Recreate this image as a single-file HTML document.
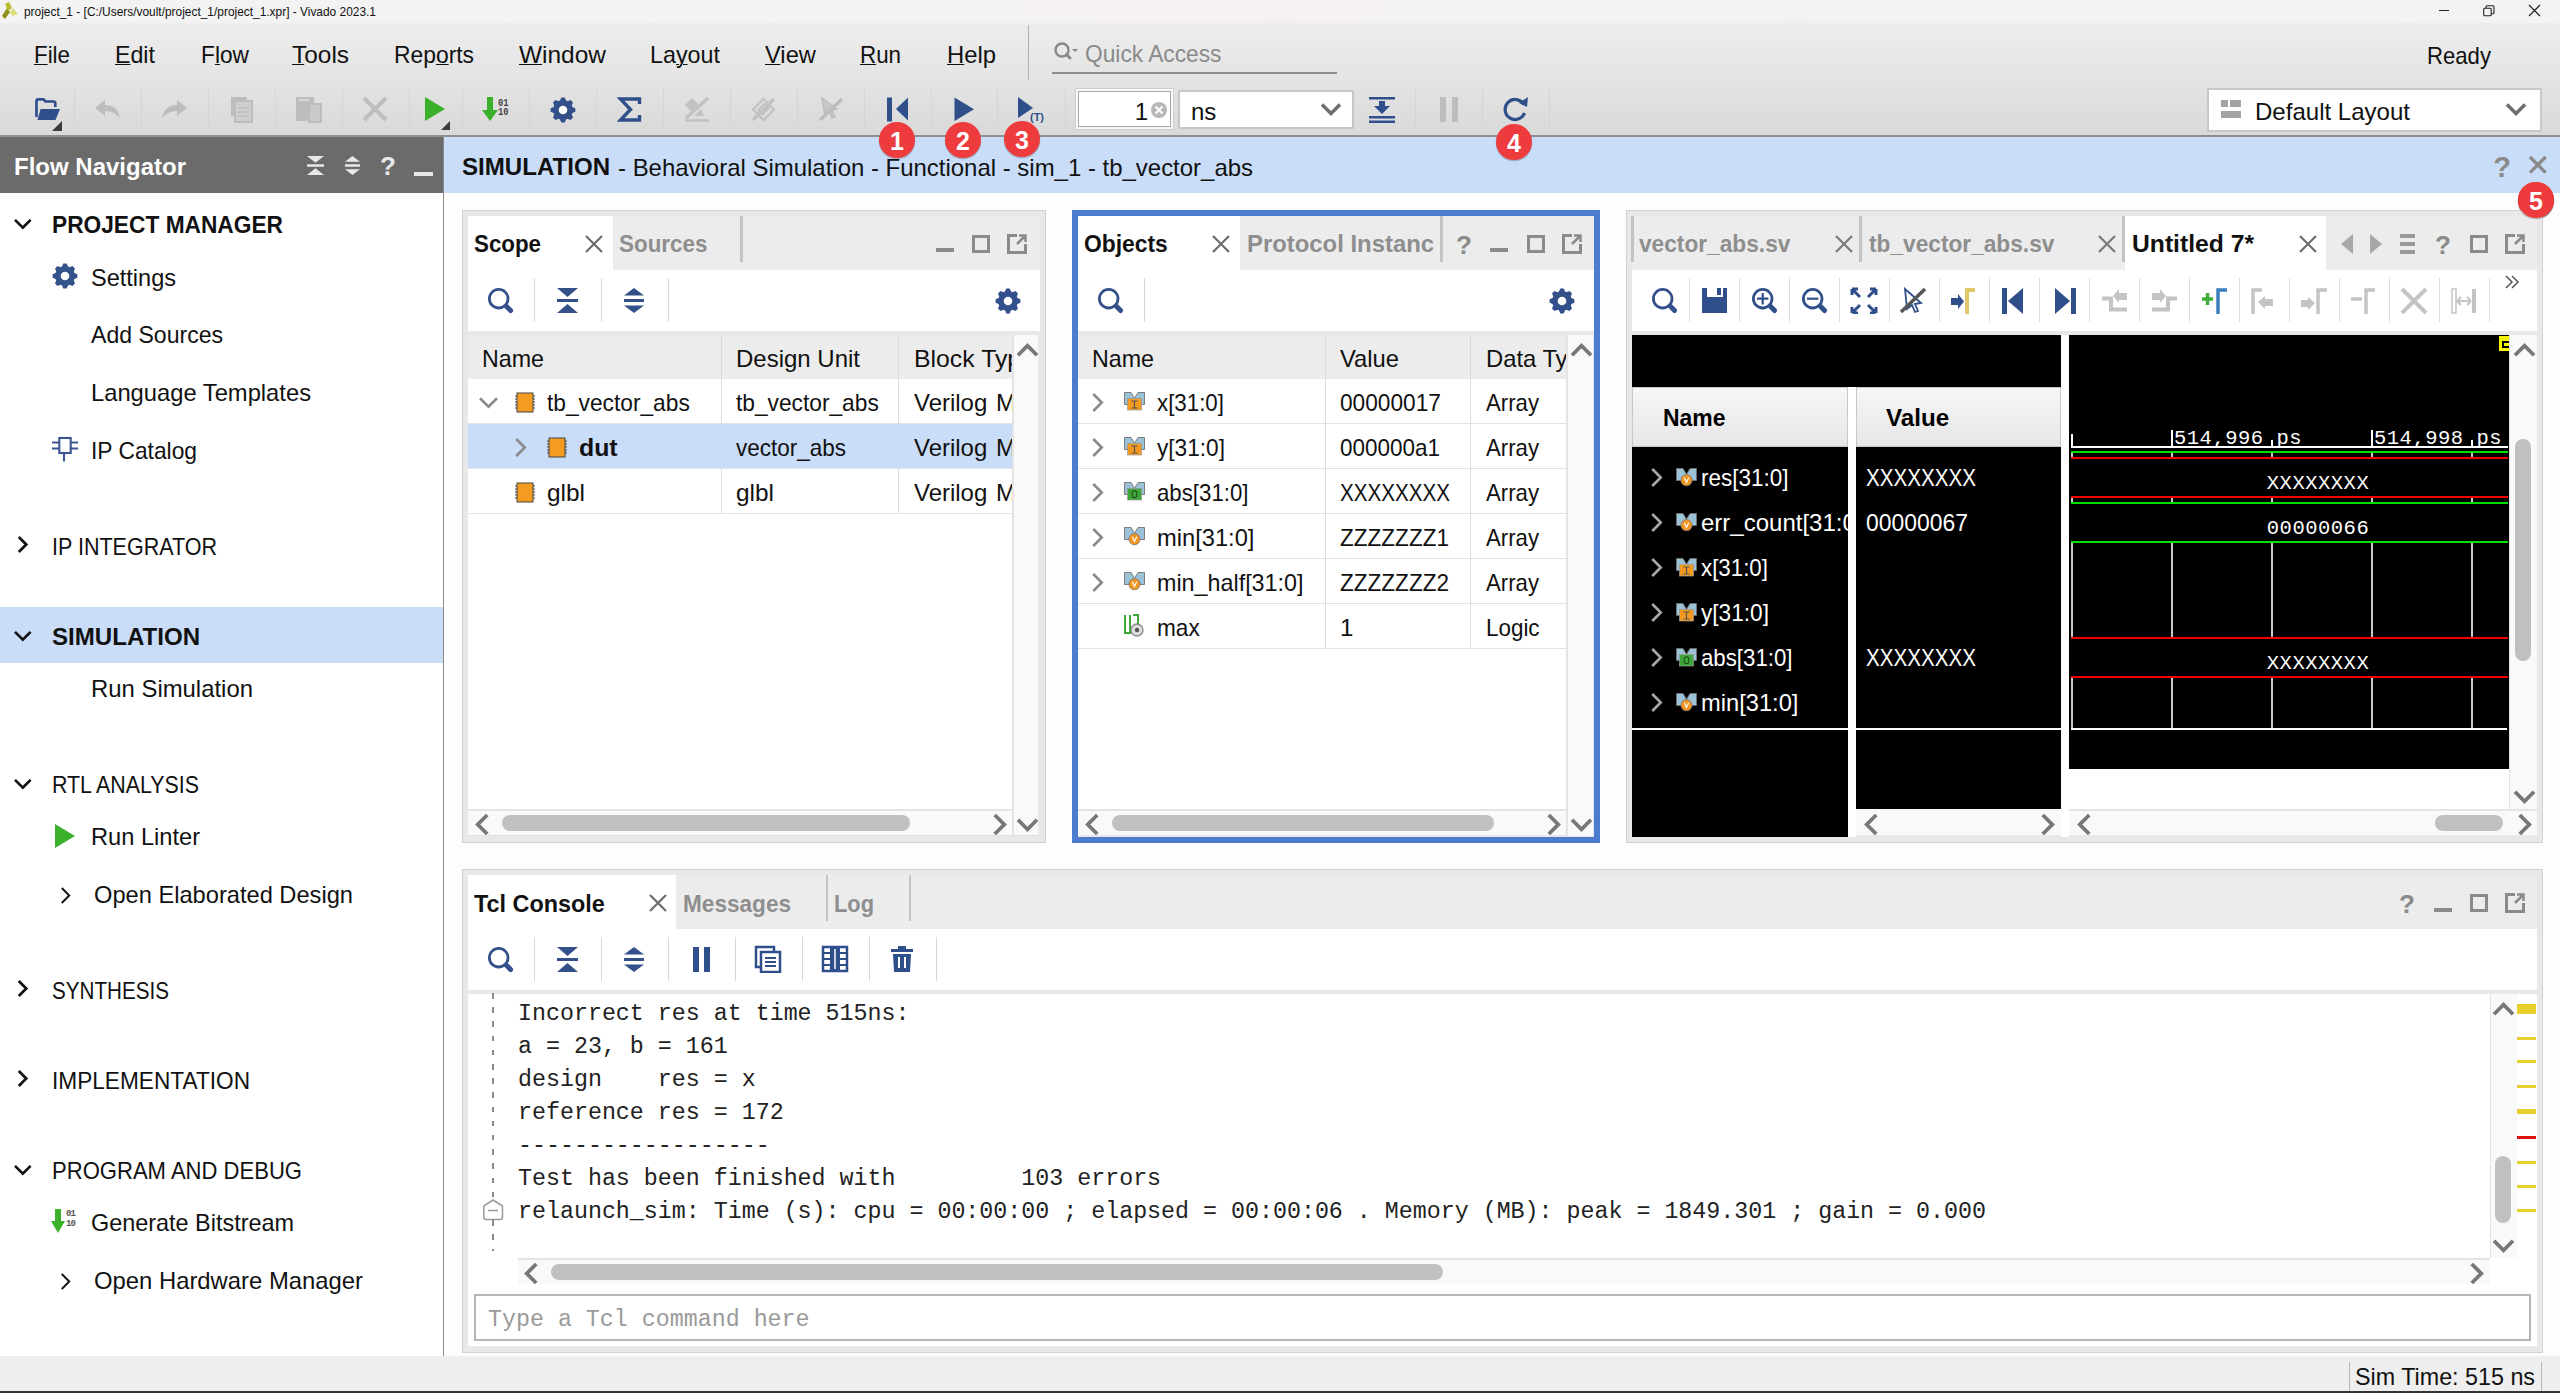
<!DOCTYPE html><html><head><meta charset="utf-8"><style>
html,body{margin:0;padding:0;width:2560px;height:1393px;overflow:hidden;background:#fdfdfd;}
body>div,body>svg{position:absolute;}
.t{position:absolute;white-space:pre;}
.s{font-family:"Liberation Sans",sans-serif;}
.m{font-family:"Liberation Mono",monospace;}
u{text-decoration:underline;text-underline-offset:1px;text-decoration-thickness:1.2px;}
</style></head><body>
<div style="left:0px;top:0px;width:2560px;height:23px;background:linear-gradient(90deg,#f3f3f3 0%,#f5f1f1 50%,#f2f2f5 70%,#f3f3f3 100%)"></div>
<svg style="left:1px;top:2px" width="18" height="18" viewBox="0 0 18 18"><polygon points="1,14 6,6 9,10 4,17" fill="#8f8f1a"/><polygon points="4,2 8,0 11,6 7,9" fill="#b9b934"/><polygon points="9,10 12,6 17,12 11,14" fill="#dede7c"/></svg>
<div class="t s" style="left:24.0px;top:3.0px;font-size:13px;line-height:17px;font-weight:400;color:#111;transform:scaleX(0.9162);transform-origin:0 0;">project_1 - [C:/Users/voult/project_1/project_1.xpr] - Vivado 2023.1</div>
<div style="left:2438.5px;top:10px;width:10.5px;height:1.2px;background:#222"></div>
<svg style="left:2483px;top:5px" width="12" height="12" viewBox="0 0 12 12"><rect x="0.7" y="3.2" width="7.5" height="7.5" rx="1" fill="none" stroke="#222" stroke-width="1.1"/><path d="M3,3.2 V1.7 Q3,0.7 4,0.7 H10 Q11,0.7 11,1.7 V7.7 Q11,8.7 10,8.7 H8.2" fill="none" stroke="#222" stroke-width="1.1"/></svg>
<svg style="left:2528px;top:4px" width="13" height="13" viewBox="0 0 13 13"><path d="M1,1 L12,12 M12,1 L1,12" stroke="#222" stroke-width="1.2"/></svg>
<div style="left:0px;top:23px;width:2560px;height:112px;background:linear-gradient(180deg,#ededed 0%,#e4e4e4 50%,#d9d9d9 100%)"></div>
<div style="left:0px;top:135px;width:2560px;height:2px;background:#8f8f8f"></div>
<div class="t s" style="left:34.0px;top:38.5px;font-size:24px;line-height:31px;font-weight:400;color:#111;transform:scaleX(0.9302);transform-origin:0 0;"><u>F</u>ile</div>
<div class="t s" style="left:115.0px;top:38.5px;font-size:24px;line-height:31px;font-weight:400;color:#111;transform:scaleX(0.9662);transform-origin:0 0;"><u>E</u>dit</div>
<div class="t s" style="left:201.0px;top:38.5px;font-size:24px;line-height:31px;font-weight:400;color:#111;transform:scaleX(0.9467);transform-origin:0 0;">F<u>l</u>ow</div>
<div class="t s" style="left:292.0px;top:38.5px;font-size:24px;line-height:31px;font-weight:400;color:#111;transform:scaleX(1.0179);transform-origin:0 0;"><u>T</u>ools</div>
<div class="t s" style="left:394.0px;top:38.5px;font-size:24px;line-height:31px;font-weight:400;color:#111;transform:scaleX(0.9524);transform-origin:0 0;">Rep<u>o</u>rts</div>
<div class="t s" style="left:519.0px;top:38.5px;font-size:24px;line-height:31px;font-weight:400;color:#111;transform:scaleX(1.0187);transform-origin:0 0;"><u>W</u>indow</div>
<div class="t s" style="left:650.0px;top:38.5px;font-size:24px;line-height:31px;font-weight:400;color:#111;transform:scaleX(0.9709);transform-origin:0 0;">La<u>y</u>out</div>
<div class="t s" style="left:765.0px;top:38.5px;font-size:24px;line-height:31px;font-weight:400;color:#111;transform:scaleX(0.9865);transform-origin:0 0;"><u>V</u>iew</div>
<div class="t s" style="left:860.0px;top:38.5px;font-size:24px;line-height:31px;font-weight:400;color:#111;transform:scaleX(0.9318);transform-origin:0 0;"><u>R</u>un</div>
<div class="t s" style="left:947.0px;top:38.5px;font-size:24px;line-height:31px;font-weight:400;color:#111;transform:scaleX(0.9919);transform-origin:0 0;"><u>H</u>elp</div>
<div style="left:1028.0px;top:25px;width:1px;height:55px;background:#b0b0b0"></div>
<svg style="left:1052px;top:40px" width="28" height="26" viewBox="0 0 28 26"><circle cx="10" cy="10" r="6.5" fill="none" stroke="#888" stroke-width="2.4"/><line x1="14.5" y1="14.5" x2="18" y2="18" stroke="#888" stroke-width="3" stroke-linecap="round"/><polygon points="20,9 26,9 23,12" fill="#888"/></svg>
<div class="t s" style="left:1085.0px;top:37.5px;font-size:24px;line-height:31px;font-weight:400;color:#8a8a8a;transform:scaleX(0.9473);transform-origin:0 0;">Quick Access</div>
<div style="left:1052px;top:72px;width:285px;height:2px;background:#8e8e8e"></div>
<div class="t s" style="left:2427.0px;top:39.5px;font-size:24px;line-height:31px;font-weight:400;color:#111;transform:scaleX(0.9222);transform-origin:0 0;">Ready</div>
<div style="left:74.0px;top:87px;width:1px;height:44px;background:#d5d5d5"></div>
<div style="left:141.0px;top:87px;width:1px;height:44px;background:#d5d5d5"></div>
<div style="left:208.0px;top:87px;width:1px;height:44px;background:#d5d5d5"></div>
<div style="left:275.0px;top:87px;width:1px;height:44px;background:#d5d5d5"></div>
<div style="left:342.0px;top:87px;width:1px;height:44px;background:#d5d5d5"></div>
<div style="left:409.0px;top:87px;width:1px;height:44px;background:#d5d5d5"></div>
<div style="left:462.0px;top:87px;width:1px;height:44px;background:#d5d5d5"></div>
<div style="left:529.0px;top:87px;width:1px;height:44px;background:#d5d5d5"></div>
<div style="left:596.0px;top:87px;width:1px;height:44px;background:#d5d5d5"></div>
<div style="left:663.0px;top:87px;width:1px;height:44px;background:#d5d5d5"></div>
<div style="left:730.0px;top:87px;width:1px;height:44px;background:#d5d5d5"></div>
<div style="left:797.0px;top:87px;width:1px;height:44px;background:#d5d5d5"></div>
<div style="left:864.0px;top:87px;width:1px;height:44px;background:#d5d5d5"></div>
<div style="left:931.0px;top:87px;width:1px;height:44px;background:#d5d5d5"></div>
<div style="left:997.0px;top:87px;width:1px;height:44px;background:#d5d5d5"></div>
<div style="left:1065.0px;top:87px;width:1px;height:44px;background:#d5d5d5"></div>
<div style="left:1415.0px;top:87px;width:1px;height:44px;background:#d5d5d5"></div>
<div style="left:1482.0px;top:87px;width:1px;height:44px;background:#d5d5d5"></div>
<div style="left:1549.0px;top:87px;width:1px;height:44px;background:#d5d5d5"></div>
<svg style="left:33px;top:96px" width="30" height="26" viewBox="0 0 30 26"><path d="M3.5,21 V5 Q3.5,3.3 5.2,3.3 H10.5 L12.5,5.5 H20.5 Q22.3,5.5 22.3,7.2 V11" fill="none" stroke="#2f4f8a" stroke-width="2.7"/><polygon points="7.5,13 27,13 22.5,24 4.5,24" fill="#2f4f8a"/></svg>
<svg style="left:52px;top:121px" width="11" height="11" viewBox="0 0 11 11"><polygon points="10,0 10,10 0,10" fill="#3c3c3c"/></svg>
<svg style="left:94px;top:100px" width="28" height="20" viewBox="0 0 28 20"><path d="M1,8 L11,0 V5 Q24,5 26,19 Q21,11 11,11 V16 Z" fill="#bdbdbd"/></svg>
<svg style="left:160px;top:100px" width="28" height="20" viewBox="0 0 28 20"><path d="M27,8 L17,0 V5 Q4,5 2,19 Q7,11 17,11 V16 Z" fill="#bdbdbd"/></svg>
<svg style="left:230px;top:96px" width="24" height="28" viewBox="0 0 24 28"><rect x="1" y="1" width="16" height="19" fill="#bdbdbd"/><rect x="5" y="5" width="17" height="21" fill="#cfcfcf" stroke="#bdbdbd" stroke-width="2"/><path d="M8,12 H19 M8,16 H19 M8,20 H19" stroke="#bdbdbd" stroke-width="1.5"/></svg>
<svg style="left:295px;top:96px" width="28" height="28" viewBox="0 0 28 28"><rect x="1" y="1" width="18" height="24" fill="#bdbdbd"/><rect x="4" y="3" width="10" height="2" fill="#d6d6d6"/><rect x="14" y="8" width="12" height="18" fill="#cacaca" stroke="#bdbdbd" stroke-width="2"/></svg>
<svg style="left:362px;top:96px" width="26" height="26" viewBox="0 0 26 26"><path d="M2,2 L24,24 M24,2 L2,24" stroke="#bdbdbd" stroke-width="4"/></svg>
<svg style="left:424px;top:96px" width="22" height="26" viewBox="0 0 22 26"><polygon points="1,1 21,13 1,25" fill="#3bb02a"/></svg>
<svg style="left:441px;top:121px" width="10" height="10" viewBox="0 0 10 10"><polygon points="9,0 9,9 0,9" fill="#3c3c3c"/></svg>
<svg style="left:482px;top:96px" width="28" height="26" viewBox="0 0 28 26"><rect x="5" y="1" width="6" height="14" fill="#3bb02a"/><polygon points="0,14 16,14 8,25" fill="#3bb02a"/></svg>
<div class="t m" style="left:497.5px;top:94.5px;font-size:11.5px;line-height:15px;font-weight:700;color:#444;transform:scaleX(0.7609);transform-origin:0 0;">01</div>
<div class="t m" style="left:497.5px;top:104.0px;font-size:11.5px;line-height:15px;font-weight:700;color:#444;transform:scaleX(0.7609);transform-origin:0 0;">10</div>
<svg style="left:548.5px;top:95.5px" width="28" height="28" viewBox="0 0 28 28"><path d="M10.72,5.30 L12.26,1.62 L15.74,1.62 L17.28,5.30 L17.84,5.53 L21.52,4.01 L23.99,6.48 L22.47,10.16 L22.70,10.72 L26.38,12.26 L26.38,15.74 L22.70,17.28 L22.47,17.84 L23.99,21.52 L21.52,23.99 L17.84,22.47 L17.28,22.70 L15.74,26.38 L12.26,26.38 L10.72,22.70 L10.16,22.47 L6.48,23.99 L4.01,21.52 L5.53,17.84 L5.30,17.28 L1.62,15.74 L1.62,12.26 L5.30,10.72 L5.53,10.16 L4.01,6.48 L6.48,4.01 L10.16,5.53Z" fill="#33508a"/><circle cx="14" cy="14" r="9.9" fill="#33508a"/><circle cx="14" cy="14" r="4.3" fill="#fff"/></svg>
<svg style="left:617px;top:96px" width="26" height="27" viewBox="0 0 26 27"><path d="M22.5,8 V3 H3.5 L13.5,13.5 L3.5,24 H22.5 V19" fill="none" stroke="#2f4f8a" stroke-width="3.4" stroke-linejoin="miter"/></svg>
<svg style="left:683px;top:96px" width="28" height="27" viewBox="0 0 28 27"><path d="M2,24.5 H26" stroke="#c2c2c2" stroke-width="2.5"/><polygon points="2,9 9,2 16,9 9,16" fill="#c2c2c2"/><path d="M3,22 L25,2" stroke="#c2c2c2" stroke-width="3.5"/><polygon points="11,20 18,13 21,20" fill="#c2c2c2"/></svg>
<svg style="left:750px;top:96px" width="28" height="27" viewBox="0 0 28 27"><rect x="6" y="6" width="15" height="15" transform="rotate(45 13.5 13.5)" fill="none" stroke="#c2c2c2" stroke-width="2.2"/><rect x="9" y="10" width="9" height="6" transform="rotate(-45 13.5 13)" fill="none" stroke="#c2c2c2" stroke-width="2"/><path d="M3,24 L24,3" stroke="#c2c2c2" stroke-width="3.5"/></svg>
<svg style="left:817px;top:96px" width="28" height="27" viewBox="0 0 28 27"><path d="M5,2 L20,13 L15,14 L18,21 L15,22 L12,15 L8,19 Z" fill="#c8c8c8" stroke="#bdbdbd" stroke-width="1.5"/><path d="M3,24 L25,3" stroke="#bdbdbd" stroke-width="3.5"/></svg>
<svg style="left:886px;top:97px" width="24" height="25" viewBox="0 0 24 25"><rect x="1" y="0.5" width="5" height="24" fill="#2f4f8a"/><polygon points="22,0.5 22,23.5 10,12" fill="#2f4f8a"/></svg>
<svg style="left:954px;top:97px" width="22" height="25" viewBox="0 0 22 25"><polygon points="0.5,0.5 20,12.2 0.5,24" fill="#2f4f8a"/></svg>
<svg style="left:1017px;top:96px" width="30" height="28" viewBox="0 0 30 28"><polygon points="1,1 16,12 1,22" fill="#2f4f8a"/></svg>
<div class="t s" style="left:1030.0px;top:110.5px;font-size:10px;line-height:13px;font-weight:700;color:#2f4f8a;transform:scaleX(1.0938);transform-origin:0 0;">(T)</div>
<div style="left:1075px;top:88px;width:99px;height:42px;background:#f8f8f8;border:1px solid #cfcfcf;box-sizing:border-box"></div>
<div style="left:1078px;top:91px;width:93px;height:36px;background:#fff;border:1px solid #a8a8a8;box-sizing:border-box"></div>
<div class="t s" style="right:1412px;top:95.5px;font-size:24px;line-height:31px;font-weight:400;color:#111;">1</div>
<svg style="left:1150px;top:101px" width="18" height="18" viewBox="0 0 18 18"><circle cx="9" cy="9" r="8" fill="#b8b8b8"/><path d="M5.5,5.5 L12.5,12.5 M12.5,5.5 L5.5,12.5" stroke="#fff" stroke-width="2"/></svg>
<div style="left:1178px;top:90px;width:176px;height:39px;background:#fff;border:2px solid #c6c6c6;box-sizing:border-box"></div>
<div class="t s" style="left:1191.0px;top:95.5px;font-size:24px;line-height:31px;font-weight:400;color:#111;">ns</div>
<svg style="left:1319px;top:97px" width="24" height="24" viewBox="0 0 24 24"><path d="M-9,-4.5 L0,4.5 L9,-4.5" transform="translate(12,12)" fill="none" stroke="#6e6e6e" stroke-width="3.5"/></svg>
<svg style="left:1368px;top:96px" width="28" height="28" viewBox="0 0 28 28"><rect x="1" y="1" width="26" height="2.5" fill="#2f4f8a"/><rect x="11" y="5" width="6" height="6" fill="#2f4f8a"/><polygon points="6,10 22,10 14,18" fill="#2f4f8a"/><rect x="1" y="20" width="26" height="2.5" fill="#2f4f8a"/><rect x="1" y="24.5" width="26" height="2.5" fill="#2f4f8a"/></svg>
<div style="left:1440px;top:97px;width:6px;height:25px;background:#bdbdbd"></div>
<div style="left:1452px;top:97px;width:6px;height:25px;background:#bdbdbd"></div>
<svg style="left:1502px;top:96px" width="28" height="26" viewBox="0 0 28 26"><path d="M21.5,8 A10,10 0 1 0 22.5,17" fill="none" stroke="#2f4f8a" stroke-width="3.2"/><polygon points="17,7 26,1 25,11" fill="#2f4f8a"/></svg>
<div style="left:2207px;top:88px;width:335px;height:44px;background:#fff;border:2px solid #c8c8c8;box-sizing:border-box"></div>
<div style="left:2221px;top:100px;width:7px;height:7px;background:#a3a3a3"></div>
<div style="left:2230px;top:100px;width:11px;height:7px;background:#a3a3a3"></div>
<div style="left:2221px;top:111px;width:20px;height:7px;background:#a3a3a3"></div>
<div class="t s" style="left:2255.0px;top:95.5px;font-size:24px;line-height:31px;font-weight:400;color:#111;transform:scaleX(1.0013);transform-origin:0 0;">Default Layout</div>
<svg style="left:2504px;top:97px" width="24" height="24" viewBox="0 0 24 24"><path d="M-9,-4.5 L0,4.5 L9,-4.5" transform="translate(12,12)" fill="none" stroke="#6e6e6e" stroke-width="3.5"/></svg>
<div style="left:0px;top:137px;width:443px;height:56px;background:#6b6b6b"></div>
<div class="t s" style="left:14.0px;top:150.5px;font-size:24px;line-height:31px;font-weight:700;color:#fff;transform:scaleX(1.0000);transform-origin:0 0;">Flow Navigator</div>
<svg style="left:307.0px;top:155.5px" width="17" height="19" viewBox="0 0 17 19"><polygon points="0,0 17,0 8.5,6.84" fill="#e8e8e8"/><rect x="0" y="8.25" width="17" height="2.5" fill="#e8e8e8"/><polygon points="8.5,12.16 17,19 0,19" fill="#e8e8e8"/></svg>
<svg style="left:344.5px;top:155.5px" width="15" height="19" viewBox="0 0 15 19"><polygon points="7.5,0 15,5.7 0,5.7" fill="#e8e8e8"/><rect x="0" y="8.25" width="15" height="2.5" fill="#e8e8e8"/><polygon points="0,13.3 15,13.3 7.5,19" fill="#e8e8e8"/></svg>
<div class="t s" style="left:-112px;width:1000px;text-align:center;top:149.0px;font-size:26px;line-height:34px;font-weight:700;color:#e8e8e8;">?</div>
<div style="left:414px;top:172px;width:19px;height:4px;background:#e8e8e8"></div>
<div style="left:0px;top:193px;width:443px;height:1163px;background:#fff"></div>
<div style="left:443px;top:137px;width:1px;height:1219px;background:#8a8a8a"></div>
<div style="left:0px;top:607px;width:443px;height:56px;background:#c9dcf8"></div>
<svg style="left:12.2px;top:212.7px" width="21.6" height="21.6" viewBox="0 0 21.6 21.6"><path d="M-7.8,-3.9 L0,3.9 L7.8,-3.9" transform="translate(10.8,10.8)" fill="none" stroke="#111" stroke-width="2.7"/></svg>
<div class="t s" style="left:52.0px;top:208.5px;font-size:24px;line-height:31px;font-weight:700;color:#111;transform:scaleX(0.9467);transform-origin:0 0;">PROJECT MANAGER</div>
<svg style="left:11.5px;top:534.0px" width="21.0" height="21.0" viewBox="0 0 21.0 21.0"><path d="M-3.75,-7.5 L3.75,0 L-3.75,7.5" transform="translate(10.5,10.5)" fill="none" stroke="#111" stroke-width="2.7"/></svg>
<div class="t s" style="left:52.0px;top:530.5px;font-size:24px;line-height:31px;font-weight:400;color:#111;transform:scaleX(0.8967);transform-origin:0 0;">IP INTEGRATOR</div>
<svg style="left:12.2px;top:624.7px" width="21.6" height="21.6" viewBox="0 0 21.6 21.6"><path d="M-7.8,-3.9 L0,3.9 L7.8,-3.9" transform="translate(10.8,10.8)" fill="none" stroke="#111" stroke-width="2.7"/></svg>
<div class="t s" style="left:52.0px;top:620.5px;font-size:24px;line-height:31px;font-weight:700;color:#111;transform:scaleX(1.0034);transform-origin:0 0;">SIMULATION</div>
<svg style="left:12.2px;top:772.7px" width="21.6" height="21.6" viewBox="0 0 21.6 21.6"><path d="M-7.8,-3.9 L0,3.9 L7.8,-3.9" transform="translate(10.8,10.8)" fill="none" stroke="#111" stroke-width="2.7"/></svg>
<div class="t s" style="left:52.0px;top:768.5px;font-size:24px;line-height:31px;font-weight:400;color:#111;transform:scaleX(0.8909);transform-origin:0 0;">RTL ANALYSIS</div>
<svg style="left:11.5px;top:978.0px" width="21.0" height="21.0" viewBox="0 0 21.0 21.0"><path d="M-3.75,-7.5 L3.75,0 L-3.75,7.5" transform="translate(10.5,10.5)" fill="none" stroke="#111" stroke-width="2.7"/></svg>
<div class="t s" style="left:52.0px;top:974.5px;font-size:24px;line-height:31px;font-weight:400;color:#111;transform:scaleX(0.8603);transform-origin:0 0;">SYNTHESIS</div>
<svg style="left:11.5px;top:1068.0px" width="21.0" height="21.0" viewBox="0 0 21.0 21.0"><path d="M-3.75,-7.5 L3.75,0 L-3.75,7.5" transform="translate(10.5,10.5)" fill="none" stroke="#111" stroke-width="2.7"/></svg>
<div class="t s" style="left:52.0px;top:1064.5px;font-size:24px;line-height:31px;font-weight:400;color:#111;transform:scaleX(0.9438);transform-origin:0 0;">IMPLEMENTATION</div>
<svg style="left:12.2px;top:1158.7px" width="21.6" height="21.6" viewBox="0 0 21.6 21.6"><path d="M-7.8,-3.9 L0,3.9 L7.8,-3.9" transform="translate(10.8,10.8)" fill="none" stroke="#111" stroke-width="2.7"/></svg>
<div class="t s" style="left:52.0px;top:1154.5px;font-size:24px;line-height:31px;font-weight:400;color:#111;transform:scaleX(0.9191);transform-origin:0 0;">PROGRAM AND DEBUG</div>
<div class="t s" style="left:91.0px;top:261.5px;font-size:24px;line-height:31px;font-weight:400;color:#111;transform:scaleX(0.9804);transform-origin:0 0;">Settings</div>
<div class="t s" style="left:91.0px;top:318.5px;font-size:24px;line-height:31px;font-weight:400;color:#111;transform:scaleX(0.9607);transform-origin:0 0;">Add Sources</div>
<div class="t s" style="left:91.0px;top:376.5px;font-size:24px;line-height:31px;font-weight:400;color:#111;transform:scaleX(0.9892);transform-origin:0 0;">Language Templates</div>
<div class="t s" style="left:91.0px;top:434.5px;font-size:24px;line-height:31px;font-weight:400;color:#111;transform:scaleX(0.9498);transform-origin:0 0;">IP Catalog</div>
<div class="t s" style="left:91.0px;top:672.5px;font-size:24px;line-height:31px;font-weight:400;color:#111;transform:scaleX(0.9951);transform-origin:0 0;">Run Simulation</div>
<div class="t s" style="left:91.0px;top:820.5px;font-size:24px;line-height:31px;font-weight:400;color:#111;transform:scaleX(0.9846);transform-origin:0 0;">Run Linter</div>
<div class="t s" style="left:91.0px;top:1206.5px;font-size:24px;line-height:31px;font-weight:400;color:#111;transform:scaleX(0.9755);transform-origin:0 0;">Generate Bitstream</div>
<svg style="left:54.5px;top:884.5px" width="21.0" height="21.0" viewBox="0 0 21.0 21.0"><path d="M-3.75,-7.5 L3.75,0 L-3.75,7.5" transform="translate(10.5,10.5)" fill="none" stroke="#111" stroke-width="1.9"/></svg>
<div class="t s" style="left:94.0px;top:878.5px;font-size:24px;line-height:31px;font-weight:400;color:#111;transform:scaleX(0.9852);transform-origin:0 0;">Open Elaborated Design</div>
<svg style="left:54.5px;top:1270.5px" width="21.0" height="21.0" viewBox="0 0 21.0 21.0"><path d="M-3.75,-7.5 L3.75,0 L-3.75,7.5" transform="translate(10.5,10.5)" fill="none" stroke="#111" stroke-width="1.9"/></svg>
<div class="t s" style="left:94.0px;top:1264.5px;font-size:24px;line-height:31px;font-weight:400;color:#111;transform:scaleX(0.9934);transform-origin:0 0;">Open Hardware Manager</div>
<svg style="left:50.5px;top:262.0px" width="28" height="28" viewBox="0 0 28 28"><path d="M10.72,5.30 L12.26,1.62 L15.74,1.62 L17.28,5.30 L17.84,5.53 L21.52,4.01 L23.99,6.48 L22.47,10.16 L22.70,10.72 L26.38,12.26 L26.38,15.74 L22.70,17.28 L22.47,17.84 L23.99,21.52 L21.52,23.99 L17.84,22.47 L17.28,22.70 L15.74,26.38 L12.26,26.38 L10.72,22.70 L10.16,22.47 L6.48,23.99 L4.01,21.52 L5.53,17.84 L5.30,17.28 L1.62,15.74 L1.62,12.26 L5.30,10.72 L5.53,10.16 L4.01,6.48 L6.48,4.01 L10.16,5.53Z" fill="#34528a"/><circle cx="14" cy="14" r="9.9" fill="#34528a"/><circle cx="14" cy="14" r="4.3" fill="#fff"/></svg>
<svg style="left:51px;top:436px" width="27" height="27" viewBox="0 0 27 27"><rect x="8.3" y="2" width="11.4" height="15" fill="none" stroke="#3a5590" stroke-width="2.1"/><path d="M1,6.5 H8 M1,12.5 H8 M20,6.5 H27 M20,12.5 H27 M13,17 V25.5" stroke="#3a5590" stroke-width="2.1"/></svg>
<svg style="left:53.5px;top:823px" width="24" height="26" viewBox="0 0 24 26"><polygon points="1,1 21,13 1,25" fill="#3bb02a"/></svg>
<svg style="left:51px;top:1208px" width="14" height="26" viewBox="0 0 14 26"><rect x="4" y="1" width="6" height="14" fill="#3bb02a"/><polygon points="0,13 14,13 7,25" fill="#3bb02a"/></svg>
<div class="t m" style="left:66.0px;top:1208.0px;font-size:9px;line-height:12px;font-weight:700;color:#555;letter-spacing:-1px">01</div>
<div class="t m" style="left:66.0px;top:1218.0px;font-size:9px;line-height:12px;font-weight:700;color:#555;letter-spacing:-1px">10</div>
<div style="left:0px;top:1356px;width:2560px;height:37px;background:#eeeeee"></div>
<div style="left:2349.0px;top:1362px;width:1px;height:31px;background:#b8b8b8"></div>
<div style="left:2541.0px;top:1362px;width:1px;height:31px;background:#b8b8b8"></div>
<div class="t s" style="left:2355.0px;top:1360.5px;font-size:24px;line-height:31px;font-weight:400;color:#111;transform:scaleX(0.9709);transform-origin:0 0;">Sim Time: 515 ns</div>
<div style="left:0px;top:1391px;width:2560px;height:2px;background:#333"></div>
<div style="left:444px;top:137px;width:2116px;height:56px;background:#c9ddf9"></div>
<div class="t s" style="left:462.0px;top:150.5px;font-size:24px;line-height:31px;font-weight:700;color:#111;transform:scaleX(1.0034);transform-origin:0 0;">SIMULATION</div>
<div class="t s" style="left:618.0px;top:151.5px;font-size:24px;line-height:31px;font-weight:400;color:#111;transform:scaleX(0.9980);transform-origin:0 0;">- Behavioral Simulation - Functional - sim_1 - tb_vector_abs</div>
<div class="t s" style="left:2002px;width:1000px;text-align:center;top:148.0px;font-size:29px;line-height:38px;font-weight:700;color:#8a8a8a;">?</div>
<svg style="left:2528.2px;top:155.2px" width="19.6" height="19.6" viewBox="0 0 19.6 19.6"><path d="M2,2 L17.6,17.6 M17.6,2 L2,17.6" stroke="#8a8a8a" stroke-width="3.3"/></svg>
<svg style="left:2515px;top:181px" width="42" height="43" viewBox="0 0 42 43"><circle cx="21" cy="20.2" r="18.3" fill="#000" opacity="0.2"/><circle cx="21" cy="19" r="18" fill="#ee3b3d"/></svg>
<div class="t s" style="left:2036px;width:1000px;text-align:center;top:185.0px;font-size:25px;line-height:32px;font-weight:700;color:#fff;">5</div>
<div style="left:462px;top:210px;width:584px;height:633px;background:#e8e8e8;border:1px solid #d2d2d2;box-sizing:border-box"></div>
<div style="left:468px;top:216px;width:572px;height:54px;background:#ececec"></div>
<div style="left:468px;top:216px;width:145px;height:54px;background:#fff"></div>
<div class="t s" style="left:474.0px;top:227.5px;font-size:24px;line-height:31px;font-weight:700;color:#111;transform:scaleX(0.9306);transform-origin:0 0;">Scope</div>
<svg style="left:584px;top:234px" width="20" height="20" viewBox="0 0 20 20"><path d="M2,2 L18,18 M18,2 L2,18" stroke="#6e6e6e" stroke-width="2.2"/></svg>
<div class="t s" style="left:619.0px;top:227.5px;font-size:24px;line-height:31px;font-weight:700;color:#8e8e8e;transform:scaleX(0.9335);transform-origin:0 0;">Sources</div>
<div style="left:740.25px;top:216px;width:2.5px;height:46px;background:#c4c4c4"></div>
<div style="left:936px;top:248px;width:18px;height:3.5px;background:#8a8a8a"></div>
<div style="left:972px;top:235px;width:18px;height:18px;border:3px solid #8a8a8a;box-sizing:border-box"></div>
<svg style="left:1007px;top:234px" width="20" height="20" viewBox="0 0 20 20"><path d="M10,1.5 H1.5 V18.5 H18.5 V10" fill="none" stroke="#8a8a8a" stroke-width="3"/><path d="M10,10 L18,2 M12,1.5 H18.5 V8" fill="none" stroke="#8a8a8a" stroke-width="2.5"/></svg>
<div style="left:468px;top:270px;width:572px;height:61px;background:#fff"></div>
<svg style="left:488px;top:288px" width="27" height="27" viewBox="0 0 27 27"><circle cx="10.7" cy="10.7" r="9.3" fill="none" stroke="#33508a" stroke-width="2.8"/><line x1="18.6" y1="18.6" x2="22.6" y2="22.6" stroke="#33508a" stroke-width="5" stroke-linecap="round"/></svg>
<div style="left:534.0px;top:278px;width:1px;height:44px;background:#d8d8d8"></div>
<div style="left:601.0px;top:278px;width:1px;height:44px;background:#d8d8d8"></div>
<div style="left:668.0px;top:278px;width:1px;height:44px;background:#d8d8d8"></div>
<svg style="left:556.5px;top:287.5px" width="21" height="25" viewBox="0 0 21 25"><polygon points="0,0 21,0 10.5,9.0" fill="#33508a"/><rect x="0" y="11.0" width="21" height="3.0" fill="#33508a"/><polygon points="10.5,16.0 21,25 0,25" fill="#33508a"/></svg>
<svg style="left:624.0px;top:287.5px" width="20" height="25" viewBox="0 0 20 25"><polygon points="10.0,0 20,7.5 0,7.5" fill="#33508a"/><rect x="0" y="11.0" width="20" height="3.0" fill="#33508a"/><polygon points="0,17.5 20,17.5 10.0,25" fill="#33508a"/></svg>
<svg style="left:993.5px;top:286.5px" width="28" height="28" viewBox="0 0 28 28"><path d="M10.72,5.30 L12.26,1.62 L15.74,1.62 L17.28,5.30 L17.84,5.53 L21.52,4.01 L23.99,6.48 L22.47,10.16 L22.70,10.72 L26.38,12.26 L26.38,15.74 L22.70,17.28 L22.47,17.84 L23.99,21.52 L21.52,23.99 L17.84,22.47 L17.28,22.70 L15.74,26.38 L12.26,26.38 L10.72,22.70 L10.16,22.47 L6.48,23.99 L4.01,21.52 L5.53,17.84 L5.30,17.28 L1.62,15.74 L1.62,12.26 L5.30,10.72 L5.53,10.16 L4.01,6.48 L6.48,4.01 L10.16,5.53Z" fill="#33508a"/><circle cx="14" cy="14" r="9.9" fill="#33508a"/><circle cx="14" cy="14" r="4.3" fill="#fff"/></svg>
<div style="left:468px;top:335px;width:545px;height:475px;background:#fff"></div>
<div style="left:468px;top:335px;width:545px;height:44px;background:#ececec"></div>
<div style="left:721.0px;top:335px;width:1px;height:178px;background:#dcdcdc"></div>
<div style="left:898.0px;top:335px;width:1px;height:178px;background:#dcdcdc"></div>
<div class="t s" style="left:482.0px;top:342.5px;font-size:24px;line-height:31px;font-weight:400;color:#111;transform:scaleX(0.9688);transform-origin:0 0;">Name</div>
<div class="t s" style="left:736.0px;top:342.5px;font-size:24px;line-height:31px;font-weight:400;color:#111;transform:scaleX(0.9992);transform-origin:0 0;">Design Unit</div>
<div style="left:0;top:0;width:1012px;height:1393px;overflow:hidden">
<div class="t s" style="left:914.0px;top:342.5px;font-size:24px;line-height:31px;font-weight:400;color:#111;transform:scaleX(1.0342);transform-origin:0 0;">Block Type</div>
</div>
<div style="left:468px;top:423px;width:545px;height:45px;background:#c9dcf8"></div>
<div style="left:468px;top:423px;width:545px;height:1px;background:#e2e2e2"></div>
<div style="left:468px;top:468px;width:545px;height:1px;background:#e2e2e2"></div>
<div style="left:468px;top:513px;width:545px;height:1px;background:#e2e2e2"></div>
<svg style="left:476.5px;top:390.5px" width="23.0" height="23.0" viewBox="0 0 23.0 23.0"><path d="M-8.5,-4.25 L0,4.25 L8.5,-4.25" transform="translate(11.5,11.5)" fill="none" stroke="#8a8a8a" stroke-width="2.6"/></svg>
<svg style="left:514px;top:392px" width="23" height="21" viewBox="0 0 23 21"><rect x="3" y="1" width="16" height="19" fill="#f39c1f" stroke="#444" stroke-width="1"/><path d="M1,4 H3 M1,7 H3 M1,10 H3 M1,13 H3 M1,16 H3 M19,4 H21 M19,7 H21 M19,10 H21 M19,13 H21 M19,16 H21" stroke="#444" stroke-width="1"/></svg>
<div class="t s" style="left:547.0px;top:386.5px;font-size:24px;line-height:31px;font-weight:400;color:#111;transform:scaleX(0.9469);transform-origin:0 0;">tb_vector_abs</div>
<div class="t s" style="left:736.0px;top:386.5px;font-size:24px;line-height:31px;font-weight:400;color:#111;transform:scaleX(0.9469);transform-origin:0 0;">tb_vector_abs</div>
<svg style="left:509.0px;top:435.5px" width="23.0" height="23.0" viewBox="0 0 23.0 23.0"><path d="M-4.25,-8.5 L4.25,0 L-4.25,8.5" transform="translate(11.5,11.5)" fill="none" stroke="#8a8a8a" stroke-width="2.6"/></svg>
<svg style="left:546px;top:437px" width="23" height="21" viewBox="0 0 23 21"><rect x="3" y="1" width="16" height="19" fill="#f39c1f" stroke="#444" stroke-width="1"/><path d="M1,4 H3 M1,7 H3 M1,10 H3 M1,13 H3 M1,16 H3 M19,4 H21 M19,7 H21 M19,10 H21 M19,13 H21 M19,16 H21" stroke="#444" stroke-width="1"/></svg>
<div class="t s" style="left:579.0px;top:431.5px;font-size:24px;line-height:31px;font-weight:700;color:#111;transform:scaleX(1.0349);transform-origin:0 0;">dut</div>
<div class="t s" style="left:736.0px;top:431.5px;font-size:24px;line-height:31px;font-weight:400;color:#111;transform:scaleX(0.9370);transform-origin:0 0;">vector_abs</div>
<svg style="left:514px;top:482px" width="23" height="21" viewBox="0 0 23 21"><rect x="3" y="1" width="16" height="19" fill="#f39c1f" stroke="#444" stroke-width="1"/><path d="M1,4 H3 M1,7 H3 M1,10 H3 M1,13 H3 M1,16 H3 M19,4 H21 M19,7 H21 M19,10 H21 M19,13 H21 M19,16 H21" stroke="#444" stroke-width="1"/></svg>
<div class="t s" style="left:547.0px;top:476.5px;font-size:24px;line-height:31px;font-weight:400;color:#111;transform:scaleX(1.0160);transform-origin:0 0;">glbl</div>
<div class="t s" style="left:736.0px;top:476.5px;font-size:24px;line-height:31px;font-weight:400;color:#111;transform:scaleX(1.0160);transform-origin:0 0;">glbl</div>
<div class="t s" style="left:914.0px;top:386.5px;font-size:24px;line-height:31px;font-weight:400;color:#111;transform:scaleX(0.9986);transform-origin:0 0;">Verilog</div>
<div style="left:0;top:0;width:1012px;height:1393px;overflow:hidden">
<div class="t s" style="left:996.0px;top:386.5px;font-size:24px;line-height:31px;font-weight:400;color:#111;">Module</div>
</div>
<div class="t s" style="left:914.0px;top:431.5px;font-size:24px;line-height:31px;font-weight:400;color:#111;transform:scaleX(0.9986);transform-origin:0 0;">Verilog</div>
<div style="left:0;top:0;width:1012px;height:1393px;overflow:hidden">
<div class="t s" style="left:996.0px;top:431.5px;font-size:24px;line-height:31px;font-weight:400;color:#111;">Module</div>
</div>
<div class="t s" style="left:914.0px;top:476.5px;font-size:24px;line-height:31px;font-weight:400;color:#111;transform:scaleX(0.9986);transform-origin:0 0;">Verilog</div>
<div style="left:0;top:0;width:1012px;height:1393px;overflow:hidden">
<div class="t s" style="left:996.0px;top:476.5px;font-size:24px;line-height:31px;font-weight:400;color:#111;">Module</div>
</div>
<div style="left:1012px;top:335px;width:26px;height:501px;background:#f9f9f9;border-left:2px solid #e4e4e4;box-sizing:border-box"></div>
<svg style="left:1014.5px;top:337.5px" width="25.0" height="25.0" viewBox="0 0 25.0 25.0"><path d="M-9.5,4.75 L0,-4.75 L9.5,4.75" transform="translate(12.5,12.5)" fill="none" stroke="#777" stroke-width="3.8"/></svg>
<svg style="left:1014.5px;top:811.5px" width="25.0" height="25.0" viewBox="0 0 25.0 25.0"><path d="M-9.5,-4.75 L0,4.75 L9.5,-4.75" transform="translate(12.5,12.5)" fill="none" stroke="#777" stroke-width="3.8"/></svg>
<div style="left:468px;top:809px;width:544px;height:26px;background:#f9f9f9;border-top:2px solid #e4e4e4;box-sizing:border-box"></div>
<div style="left:502px;top:815px;width:408px;height:16px;background:#c0c0c0;border-radius:8px"></div>
<svg style="left:470.0px;top:811.5px" width="25.0" height="25.0" viewBox="0 0 25.0 25.0"><path d="M4.75,-9.5 L-4.75,0 L4.75,9.5" transform="translate(12.5,12.5)" fill="none" stroke="#777" stroke-width="3.8"/></svg>
<svg style="left:986.5px;top:811.5px" width="25.0" height="25.0" viewBox="0 0 25.0 25.0"><path d="M-4.75,-9.5 L4.75,0 L-4.75,9.5" transform="translate(12.5,12.5)" fill="none" stroke="#777" stroke-width="3.8"/></svg>
<div style="left:468px;top:835px;width:572px;height:1px;background:#e0e0e0"></div>
<div style="left:1072px;top:210px;width:528px;height:633px;background:#e8e8e8;border:6px solid #4a7dd0;box-sizing:border-box"></div>
<div style="left:1078px;top:216px;width:516px;height:54px;background:#ececec"></div>
<div style="left:1078px;top:216px;width:162px;height:54px;background:#fff"></div>
<div class="t s" style="left:1084.0px;top:227.5px;font-size:24px;line-height:31px;font-weight:700;color:#111;transform:scaleX(0.9511);transform-origin:0 0;">Objects</div>
<svg style="left:1211px;top:234px" width="20" height="20" viewBox="0 0 20 20"><path d="M2,2 L18,18 M18,2 L2,18" stroke="#6e6e6e" stroke-width="2.2"/></svg>
<div class="t s" style="left:1247.0px;top:227.5px;font-size:24px;line-height:31px;font-weight:700;color:#8e8e8e;transform:scaleX(0.9947);transform-origin:0 0;">Protocol Instanc</div>
<div style="left:1440.25px;top:216px;width:2.5px;height:46px;background:#c4c4c4"></div>
<div class="t s" style="left:964px;width:1000px;text-align:center;top:228.0px;font-size:26px;line-height:34px;font-weight:700;color:#8a8a8a;">?</div>
<div style="left:1490px;top:248px;width:18px;height:3.5px;background:#8a8a8a"></div>
<div style="left:1527px;top:235px;width:18px;height:18px;border:3px solid #8a8a8a;box-sizing:border-box"></div>
<svg style="left:1562px;top:234px" width="20" height="20" viewBox="0 0 20 20"><path d="M10,1.5 H1.5 V18.5 H18.5 V10" fill="none" stroke="#8a8a8a" stroke-width="3"/><path d="M10,10 L18,2 M12,1.5 H18.5 V8" fill="none" stroke="#8a8a8a" stroke-width="2.5"/></svg>
<div style="left:1078px;top:270px;width:516px;height:61px;background:#fff"></div>
<svg style="left:1098px;top:288px" width="27" height="27" viewBox="0 0 27 27"><circle cx="10.7" cy="10.7" r="9.3" fill="none" stroke="#33508a" stroke-width="2.8"/><line x1="18.6" y1="18.6" x2="22.6" y2="22.6" stroke="#33508a" stroke-width="5" stroke-linecap="round"/></svg>
<div style="left:1144.0px;top:278px;width:1px;height:44px;background:#d8d8d8"></div>
<svg style="left:1547.5px;top:286.5px" width="28" height="28" viewBox="0 0 28 28"><path d="M10.72,5.30 L12.26,1.62 L15.74,1.62 L17.28,5.30 L17.84,5.53 L21.52,4.01 L23.99,6.48 L22.47,10.16 L22.70,10.72 L26.38,12.26 L26.38,15.74 L22.70,17.28 L22.47,17.84 L23.99,21.52 L21.52,23.99 L17.84,22.47 L17.28,22.70 L15.74,26.38 L12.26,26.38 L10.72,22.70 L10.16,22.47 L6.48,23.99 L4.01,21.52 L5.53,17.84 L5.30,17.28 L1.62,15.74 L1.62,12.26 L5.30,10.72 L5.53,10.16 L4.01,6.48 L6.48,4.01 L10.16,5.53Z" fill="#33508a"/><circle cx="14" cy="14" r="9.9" fill="#33508a"/><circle cx="14" cy="14" r="4.3" fill="#fff"/></svg>
<div style="left:1078px;top:335px;width:489px;height:475px;background:#fff"></div>
<div style="left:1078px;top:335px;width:489px;height:44px;background:#ececec"></div>
<div style="left:1325.0px;top:335px;width:1px;height:313px;background:#dcdcdc"></div>
<div style="left:1470.0px;top:335px;width:1px;height:313px;background:#dcdcdc"></div>
<div class="t s" style="left:1092.0px;top:342.5px;font-size:24px;line-height:31px;font-weight:400;color:#111;transform:scaleX(0.9688);transform-origin:0 0;">Name</div>
<div class="t s" style="left:1340.0px;top:342.5px;font-size:24px;line-height:31px;font-weight:400;color:#111;transform:scaleX(0.9899);transform-origin:0 0;">Value</div>
<div style="left:0;top:0;width:1566px;height:1393px;overflow:hidden">
<div class="t s" style="left:1486.0px;top:342.5px;font-size:24px;line-height:31px;font-weight:400;color:#111;transform:scaleX(0.9908);transform-origin:0 0;">Data Type</div>
</div>
<div style="left:1078px;top:423px;width:489px;height:1px;background:#e2e2e2"></div>
<svg style="left:1086.0px;top:390.5px" width="23.0" height="23.0" viewBox="0 0 23.0 23.0"><path d="M-4.25,-8.5 L4.25,0 L-4.25,8.5" transform="translate(11.5,11.5)" fill="none" stroke="#8a8a8a" stroke-width="2.6"/></svg>
<svg style="left:1124px;top:392.3px" width="22" height="20" viewBox="0 0 22 20"><path d="M0.5,0.5 H7 L10.5,6.3 L14,0.5 H20.5 V12.5 H0.5 Z" fill="#9bc2d6" stroke="#707070" stroke-width="0.9"/><rect x="3.5" y="6.5" width="14" height="11.5" fill="#f39a1e" stroke="#999" stroke-width="0.7"/><path d="M7.5,9 H13.5 M10.5,9 V16 M7.5,16 H13.5" stroke="#555" stroke-width="1.2"/></svg>
<div class="t s" style="left:1157.0px;top:386.5px;font-size:24px;line-height:31px;font-weight:400;color:#111;transform:scaleX(0.9293);transform-origin:0 0;">x[31:0]</div>
<div class="t s" style="left:1340.0px;top:386.5px;font-size:24px;line-height:31px;font-weight:400;color:#111;transform:scaleX(0.9457);transform-origin:0 0;">00000017</div>
<div class="t s" style="left:1486.0px;top:386.5px;font-size:24px;line-height:31px;font-weight:400;color:#111;transform:scaleX(0.9250);transform-origin:0 0;">Array</div>
<div style="left:1078px;top:468px;width:489px;height:1px;background:#e2e2e2"></div>
<svg style="left:1086.0px;top:435.5px" width="23.0" height="23.0" viewBox="0 0 23.0 23.0"><path d="M-4.25,-8.5 L4.25,0 L-4.25,8.5" transform="translate(11.5,11.5)" fill="none" stroke="#8a8a8a" stroke-width="2.6"/></svg>
<svg style="left:1124px;top:437.3px" width="22" height="20" viewBox="0 0 22 20"><path d="M0.5,0.5 H7 L10.5,6.3 L14,0.5 H20.5 V12.5 H0.5 Z" fill="#9bc2d6" stroke="#707070" stroke-width="0.9"/><rect x="3.5" y="6.5" width="14" height="11.5" fill="#f39a1e" stroke="#999" stroke-width="0.7"/><path d="M7.5,9 H13.5 M10.5,9 V16 M7.5,16 H13.5" stroke="#555" stroke-width="1.2"/></svg>
<div class="t s" style="left:1157.0px;top:431.5px;font-size:24px;line-height:31px;font-weight:400;color:#111;transform:scaleX(0.9431);transform-origin:0 0;">y[31:0]</div>
<div class="t s" style="left:1340.0px;top:431.5px;font-size:24px;line-height:31px;font-weight:400;color:#111;transform:scaleX(0.9363);transform-origin:0 0;">000000a1</div>
<div class="t s" style="left:1486.0px;top:431.5px;font-size:24px;line-height:31px;font-weight:400;color:#111;transform:scaleX(0.9250);transform-origin:0 0;">Array</div>
<div style="left:1078px;top:513px;width:489px;height:1px;background:#e2e2e2"></div>
<svg style="left:1086.0px;top:480.5px" width="23.0" height="23.0" viewBox="0 0 23.0 23.0"><path d="M-4.25,-8.5 L4.25,0 L-4.25,8.5" transform="translate(11.5,11.5)" fill="none" stroke="#8a8a8a" stroke-width="2.6"/></svg>
<svg style="left:1124px;top:482.3px" width="22" height="20" viewBox="0 0 22 20"><path d="M0.5,0.5 H7 L10.5,6.3 L14,0.5 H20.5 V12.5 H0.5 Z" fill="#9bc2d6" stroke="#707070" stroke-width="0.9"/><rect x="3.5" y="6.5" width="14" height="11.5" fill="#3fa63a" stroke="#999" stroke-width="0.7"/><ellipse cx="10.5" cy="12.2" rx="2.4" ry="3.4" fill="none" stroke="#1d4d1a" stroke-width="1.1"/></svg>
<div class="t s" style="left:1157.0px;top:476.5px;font-size:24px;line-height:31px;font-weight:400;color:#111;transform:scaleX(0.9271);transform-origin:0 0;">abs[31:0]</div>
<div class="t s" style="left:1340.0px;top:476.5px;font-size:24px;line-height:31px;font-weight:400;color:#111;transform:scaleX(0.8587);transform-origin:0 0;">XXXXXXXX</div>
<div class="t s" style="left:1486.0px;top:476.5px;font-size:24px;line-height:31px;font-weight:400;color:#111;transform:scaleX(0.9250);transform-origin:0 0;">Array</div>
<div style="left:1078px;top:558px;width:489px;height:1px;background:#e2e2e2"></div>
<svg style="left:1086.0px;top:525.5px" width="23.0" height="23.0" viewBox="0 0 23.0 23.0"><path d="M-4.25,-8.5 L4.25,0 L-4.25,8.5" transform="translate(11.5,11.5)" fill="none" stroke="#8a8a8a" stroke-width="2.6"/></svg>
<svg style="left:1124px;top:527.3px" width="22" height="20" viewBox="0 0 22 20"><path d="M0.5,0.5 H7 L10.5,6.3 L14,0.5 H20.5 V12.5 H0.5 Z" fill="#9bc2d6" stroke="#707070" stroke-width="0.9"/><circle cx="10.5" cy="12.2" r="5.6" fill="#f39522" stroke="#7a7a7a" stroke-width="0.8"/><path d="M8.3,9.8 L10.5,14.4 L12.7,9.8" fill="none" stroke="#fff" stroke-width="1.2"/></svg>
<div class="t s" style="left:1157.0px;top:521.5px;font-size:24px;line-height:31px;font-weight:400;color:#111;transform:scaleX(0.9868);transform-origin:0 0;">min[31:0]</div>
<div class="t s" style="left:1340.0px;top:521.5px;font-size:24px;line-height:31px;font-weight:400;color:#111;transform:scaleX(0.9397);transform-origin:0 0;">ZZZZZZZ1</div>
<div class="t s" style="left:1486.0px;top:521.5px;font-size:24px;line-height:31px;font-weight:400;color:#111;transform:scaleX(0.9250);transform-origin:0 0;">Array</div>
<div style="left:1078px;top:603px;width:489px;height:1px;background:#e2e2e2"></div>
<svg style="left:1086.0px;top:570.5px" width="23.0" height="23.0" viewBox="0 0 23.0 23.0"><path d="M-4.25,-8.5 L4.25,0 L-4.25,8.5" transform="translate(11.5,11.5)" fill="none" stroke="#8a8a8a" stroke-width="2.6"/></svg>
<svg style="left:1124px;top:572.3px" width="22" height="20" viewBox="0 0 22 20"><path d="M0.5,0.5 H7 L10.5,6.3 L14,0.5 H20.5 V12.5 H0.5 Z" fill="#9bc2d6" stroke="#707070" stroke-width="0.9"/><circle cx="10.5" cy="12.2" r="5.6" fill="#f39522" stroke="#7a7a7a" stroke-width="0.8"/><path d="M8.3,9.8 L10.5,14.4 L12.7,9.8" fill="none" stroke="#fff" stroke-width="1.2"/></svg>
<div class="t s" style="left:1157.0px;top:566.5px;font-size:24px;line-height:31px;font-weight:400;color:#111;transform:scaleX(0.9715);transform-origin:0 0;">min_half[31:0]</div>
<div class="t s" style="left:1340.0px;top:566.5px;font-size:24px;line-height:31px;font-weight:400;color:#111;transform:scaleX(0.9397);transform-origin:0 0;">ZZZZZZZ2</div>
<div class="t s" style="left:1486.0px;top:566.5px;font-size:24px;line-height:31px;font-weight:400;color:#111;transform:scaleX(0.9250);transform-origin:0 0;">Array</div>
<div style="left:1078px;top:648px;width:489px;height:1px;background:#e2e2e2"></div>
<svg style="left:1122px;top:613px" width="22" height="26" viewBox="0 0 22 26"><path d="M3,2 V20 H8 V2 M11,2 H16 V12" fill="none" stroke="#3fa63a" stroke-width="2"/><circle cx="15" cy="17" r="6" fill="#ddd" stroke="#888" stroke-width="1.3"/><circle cx="15" cy="17" r="2.2" fill="#555"/></svg>
<div class="t s" style="left:1157.0px;top:611.5px;font-size:24px;line-height:31px;font-weight:400;color:#111;transform:scaleX(0.9426);transform-origin:0 0;">max</div>
<div class="t s" style="left:1340.0px;top:611.5px;font-size:24px;line-height:31px;font-weight:400;color:#111;">1</div>
<div class="t s" style="left:1486.0px;top:611.5px;font-size:24px;line-height:31px;font-weight:400;color:#111;transform:scaleX(0.9338);transform-origin:0 0;">Logic</div>
<div style="left:1566px;top:335px;width:27px;height:501px;background:#f9f9f9;border-left:2px solid #e4e4e4;box-sizing:border-box"></div>
<svg style="left:1568.5px;top:337.5px" width="25.0" height="25.0" viewBox="0 0 25.0 25.0"><path d="M-9.5,4.75 L0,-4.75 L9.5,4.75" transform="translate(12.5,12.5)" fill="none" stroke="#777" stroke-width="3.8"/></svg>
<svg style="left:1568.5px;top:811.5px" width="25.0" height="25.0" viewBox="0 0 25.0 25.0"><path d="M-9.5,-4.75 L0,4.75 L9.5,-4.75" transform="translate(12.5,12.5)" fill="none" stroke="#777" stroke-width="3.8"/></svg>
<div style="left:1078px;top:809px;width:488px;height:26px;background:#f9f9f9;border-top:2px solid #e4e4e4;box-sizing:border-box"></div>
<div style="left:1112px;top:815px;width:382px;height:16px;background:#c0c0c0;border-radius:8px"></div>
<svg style="left:1080.0px;top:811.5px" width="25.0" height="25.0" viewBox="0 0 25.0 25.0"><path d="M4.75,-9.5 L-4.75,0 L4.75,9.5" transform="translate(12.5,12.5)" fill="none" stroke="#777" stroke-width="3.8"/></svg>
<svg style="left:1540.5px;top:811.5px" width="25.0" height="25.0" viewBox="0 0 25.0 25.0"><path d="M-4.75,-9.5 L4.75,0 L-4.75,9.5" transform="translate(12.5,12.5)" fill="none" stroke="#777" stroke-width="3.8"/></svg>
<div style="left:1626px;top:210px;width:917px;height:633px;background:#e8e8e8;border:1px solid #d2d2d2;box-sizing:border-box"></div>
<div style="left:1632px;top:216px;width:905px;height:54px;background:#ececec"></div>
<div style="left:2125px;top:216px;width:201px;height:54px;background:#fff"></div>
<div style="left:1631.25px;top:216px;width:2.5px;height:46px;background:#c4c4c4"></div>
<div style="left:1859.25px;top:216px;width:2.5px;height:46px;background:#c4c4c4"></div>
<div style="left:2122.25px;top:216px;width:2.5px;height:46px;background:#c4c4c4"></div>
<div class="t s" style="left:1639.0px;top:227.5px;font-size:24px;line-height:31px;font-weight:700;color:#8e8e8e;transform:scaleX(0.9457);transform-origin:0 0;">vector_abs.sv</div>
<svg style="left:1834px;top:234px" width="20" height="20" viewBox="0 0 20 20"><path d="M2,2 L18,18 M18,2 L2,18" stroke="#7a7a7a" stroke-width="2.2"/></svg>
<div class="t s" style="left:1869.0px;top:227.5px;font-size:24px;line-height:31px;font-weight:700;color:#8e8e8e;transform:scaleX(0.9454);transform-origin:0 0;">tb_vector_abs.sv</div>
<svg style="left:2097px;top:234px" width="20" height="20" viewBox="0 0 20 20"><path d="M2,2 L18,18 M18,2 L2,18" stroke="#7a7a7a" stroke-width="2.2"/></svg>
<div class="t s" style="left:2132.0px;top:227.5px;font-size:24px;line-height:31px;font-weight:700;color:#111;transform:scaleX(1.0278);transform-origin:0 0;">Untitled 7*</div>
<svg style="left:2298px;top:234px" width="20" height="20" viewBox="0 0 20 20"><path d="M2,2 L18,18 M18,2 L2,18" stroke="#6e6e6e" stroke-width="2.2"/></svg>
<svg style="left:2337px;top:232px" width="20" height="24" viewBox="0 0 20 24"><polygon points="16,2 16,22 4,12" fill="#a8a8a8"/></svg>
<svg style="left:2366px;top:232px" width="20" height="24" viewBox="0 0 20 24"><polygon points="4,2 4,22 16,12" fill="#a8a8a8"/></svg>
<div style="left:2400px;top:234px;width:15px;height:4px;background:#9a9a9a"></div>
<div style="left:2400px;top:242px;width:15px;height:4px;background:#9a9a9a"></div>
<div style="left:2400px;top:250px;width:15px;height:4px;background:#9a9a9a"></div>
<div class="t s" style="left:1943px;width:1000px;text-align:center;top:228.0px;font-size:26px;line-height:34px;font-weight:700;color:#8a8a8a;">?</div>
<div style="left:2470px;top:235px;width:18px;height:18px;border:3px solid #8a8a8a;box-sizing:border-box"></div>
<svg style="left:2505px;top:234px" width="20" height="20" viewBox="0 0 20 20"><path d="M10,1.5 H1.5 V18.5 H18.5 V10" fill="none" stroke="#8a8a8a" stroke-width="3"/><path d="M10,10 L18,2 M12,1.5 H18.5 V8" fill="none" stroke="#8a8a8a" stroke-width="2.5"/></svg>
<div style="left:1632px;top:270px;width:905px;height:61px;background:#fff"></div>
<div style="left:1689.0px;top:278px;width:1px;height:44px;background:#dedede"></div>
<div style="left:1739.0px;top:278px;width:1px;height:44px;background:#dedede"></div>
<div style="left:1789.0px;top:278px;width:1px;height:44px;background:#dedede"></div>
<div style="left:1839.0px;top:278px;width:1px;height:44px;background:#dedede"></div>
<div style="left:1889.0px;top:278px;width:1px;height:44px;background:#dedede"></div>
<div style="left:1939.0px;top:278px;width:1px;height:44px;background:#dedede"></div>
<div style="left:1989.0px;top:278px;width:1px;height:44px;background:#dedede"></div>
<div style="left:2039.0px;top:278px;width:1px;height:44px;background:#dedede"></div>
<div style="left:2089.0px;top:278px;width:1px;height:44px;background:#dedede"></div>
<div style="left:2139.0px;top:278px;width:1px;height:44px;background:#dedede"></div>
<div style="left:2189.0px;top:278px;width:1px;height:44px;background:#dedede"></div>
<div style="left:2239.0px;top:278px;width:1px;height:44px;background:#dedede"></div>
<div style="left:2289.0px;top:278px;width:1px;height:44px;background:#dedede"></div>
<div style="left:2339.0px;top:278px;width:1px;height:44px;background:#dedede"></div>
<div style="left:2389.0px;top:278px;width:1px;height:44px;background:#dedede"></div>
<div style="left:2439.0px;top:278px;width:1px;height:44px;background:#dedede"></div>
<div style="left:2489.0px;top:278px;width:1px;height:44px;background:#dedede"></div>
<svg style="left:1652px;top:288px" width="27" height="27" viewBox="0 0 27 27"><circle cx="10.7" cy="10.7" r="9.3" fill="none" stroke="#33508a" stroke-width="2.8"/><line x1="18.6" y1="18.6" x2="22.6" y2="22.6" stroke="#33508a" stroke-width="5" stroke-linecap="round"/></svg>
<svg style="left:1702px;top:288px" width="25" height="25" viewBox="0 0 25 25"><rect x="0" y="0" width="25" height="25" fill="#2f4f8a"/><rect x="5" y="0" width="16" height="9" fill="#fff"/><rect x="15" y="0" width="4" height="7" fill="#2f4f8a"/></svg>
<svg style="left:1752px;top:288px" width="27" height="27" viewBox="0 0 27 27"><circle cx="10.7" cy="10.7" r="9.3" fill="none" stroke="#2f4f8a" stroke-width="2.8"/><path d="M10.7,5 V16.4 M5,10.7 H16.4" stroke="#2f4f8a" stroke-width="2.2"/><line x1="18.6" y1="18.6" x2="22.6" y2="22.6" stroke="#2f4f8a" stroke-width="5" stroke-linecap="round"/></svg>
<svg style="left:1802px;top:288px" width="27" height="27" viewBox="0 0 27 27"><circle cx="10.7" cy="10.7" r="9.3" fill="none" stroke="#2f4f8a" stroke-width="2.8"/><path d="M5,10.7 H16.4" stroke="#2f4f8a" stroke-width="2.2"/><line x1="18.6" y1="18.6" x2="22.6" y2="22.6" stroke="#2f4f8a" stroke-width="5" stroke-linecap="round"/></svg>
<svg style="left:1849.0px;top:286.0px" width="30" height="28" viewBox="0 0 30 28"><path d="M3,3 L11,11 M3,3 H9 M3,3 V9 M27,3 L19,11 M27,3 H21 M27,3 V9 M3,27 L11,19 M3,27 H9 M3,27 V21 M27,27 L19,19 M27,27 H21 M27,27 V21" fill="none" stroke="#2f4f8a" stroke-width="3"/></svg>
<svg style="left:1899.0px;top:286.0px" width="30" height="28" viewBox="0 0 30 28"><path d="M6,3 L22,17 L16,18 L19,25 L16,26 L13,19 L8,23 Z" fill="#fff" stroke="#2f4f8a" stroke-width="1.8"/><path d="M2,26 L26,3" stroke="#555" stroke-width="3.5"/></svg>
<svg style="left:1949.0px;top:286.0px" width="30" height="28" viewBox="0 0 30 28"><rect x="2" y="12" width="8" height="7" fill="#2f4f8a"/><polygon points="9,8 15,15.5 9,23" fill="#2f4f8a"/><path d="M18,28 V4 H26" fill="none" stroke="#e0c76a" stroke-width="4"/></svg>
<svg style="left:1999.0px;top:286.0px" width="30" height="28" viewBox="0 0 30 28"><rect x="3" y="2" width="5" height="26" fill="#2f4f8a"/><polygon points="24,2 24,28 9,15" fill="#2f4f8a"/></svg>
<svg style="left:2049.0px;top:286.0px" width="30" height="28" viewBox="0 0 30 28"><rect x="22" y="2" width="5" height="26" fill="#2f4f8a"/><polygon points="6,2 6,28 21,15" fill="#2f4f8a"/></svg>
<svg style="left:2099.0px;top:286.0px" width="30" height="28" viewBox="0 0 30 28"><path d="M3,12.5 H12 V23.5 H28" fill="none" stroke="#c4c4c4" stroke-width="4"/><polygon points="14,10 20,3 20,7 28,7 28,14 20,14 20,17" fill="#c4c4c4"/></svg>
<svg style="left:2149.0px;top:286.0px" width="30" height="28" viewBox="0 0 30 28"><path d="M28,12.5 H19 V23.5 H3" fill="none" stroke="#c4c4c4" stroke-width="4"/><polygon points="17,10 11,3 11,7 3,7 3,14 11,14 11,17" fill="#c4c4c4"/></svg>
<svg style="left:2199.0px;top:286.0px" width="30" height="28" viewBox="0 0 30 28"><path d="M3,13 H14 M8.5,7 V19" stroke="#3fae3f" stroke-width="3.5"/><path d="M19,28 V4 H28" fill="none" stroke="#3b7fc0" stroke-width="3.5"/></svg>
<svg style="left:2249.0px;top:286.0px" width="30" height="28" viewBox="0 0 30 28"><path d="M4,28 V4 H13" fill="none" stroke="#c4c4c4" stroke-width="3.5"/><polygon points="9,16 16,10 16,13 24,13 24,20 16,20 16,23" fill="#c4c4c4"/></svg>
<svg style="left:2299.0px;top:286.0px" width="30" height="28" viewBox="0 0 30 28"><path d="M19,28 V4 H28" fill="none" stroke="#c4c4c4" stroke-width="3.5"/><polygon points="16,17 9,11 9,14 2,14 2,21 9,21 9,24" fill="#c4c4c4"/></svg>
<svg style="left:2349.0px;top:286.0px" width="30" height="28" viewBox="0 0 30 28"><path d="M2,13 H13" stroke="#c4c4c4" stroke-width="3.5"/><path d="M17,28 V4 H26" fill="none" stroke="#c4c4c4" stroke-width="3.5"/></svg>
<svg style="left:2399.0px;top:286.0px" width="30" height="28" viewBox="0 0 30 28"><path d="M3,3 L27,27 M27,3 L3,27" stroke="#c4c4c4" stroke-width="4"/></svg>
<svg style="left:2449.0px;top:286.0px" width="30" height="28" viewBox="0 0 30 28"><rect x="3" y="3" width="4" height="24" fill="none" stroke="#c4c4c4" stroke-width="1.5"/><rect x="23" y="3" width="4" height="24" fill="#c4c4c4"/><path d="M8,15 H22 M8,15 L12,11 M8,15 L12,19 M22,15 L18,11 M22,15 L18,19" fill="none" stroke="#c4c4c4" stroke-width="2"/></svg>
<svg style="left:2503px;top:273px" width="18" height="18" viewBox="0 0 18 18"><path d="M3,3 L9,9 L3,15 M9,3 L15,9 L9,15" fill="none" stroke="#555" stroke-width="1.5"/></svg>
<div style="left:1632px;top:335px;width:905px;height:474px;background:#fff"></div>
<div style="left:1632px;top:335px;width:429px;height:52px;background:#000"></div>
<div style="left:1632px;top:387px;width:216px;height:60px;background:linear-gradient(180deg,#f6f6f6,#e6e6e8);border:1px solid #c8c8c8;box-sizing:border-box"></div>
<div style="left:1856px;top:387px;width:205px;height:60px;background:linear-gradient(180deg,#f6f6f6,#e6e6e8);border:1px solid #c8c8c8;box-sizing:border-box"></div>
<div class="t s" style="left:1663.0px;top:401.5px;font-size:24px;line-height:31px;font-weight:700;color:#000;transform:scaleX(0.9557);transform-origin:0 0;">Name</div>
<div class="t s" style="left:1886.0px;top:401.5px;font-size:24px;line-height:31px;font-weight:700;color:#000;transform:scaleX(1.0080);transform-origin:0 0;">Value</div>
<div style="left:1632px;top:447px;width:216px;height:390px;background:#000"></div>
<div style="left:1856px;top:447px;width:205px;height:362px;background:#000"></div>
<div style="left:2069px;top:335px;width:440px;height:434px;background:#000"></div>
<div style="left:1632px;top:728px;width:216px;height:2px;background:#fff"></div>
<div style="left:1856px;top:728px;width:205px;height:2px;background:#fff"></div>
<svg style="left:1645.0px;top:465.5px" width="23.0" height="23.0" viewBox="0 0 23.0 23.0"><path d="M-4.25,-8.5 L4.25,0 L-4.25,8.5" transform="translate(11.5,11.5)" fill="none" stroke="#a8a8a8" stroke-width="2.6"/></svg>
<svg style="left:1676px;top:467.5px" width="22" height="20" viewBox="0 0 22 20"><path d="M0.5,0.5 H7 L10.5,6.3 L14,0.5 H20.5 V12.5 H0.5 Z" fill="#9bc2d6" stroke="#707070" stroke-width="0.9"/><circle cx="10.5" cy="12.2" r="5.6" fill="#f39522" stroke="#7a7a7a" stroke-width="0.8"/><path d="M8.3,9.8 L10.5,14.4 L12.7,9.8" fill="none" stroke="#fff" stroke-width="1.2"/></svg>
<div style="left:0;top:0;width:1848px;height:1393px;overflow:hidden">
<div class="t s" style="left:1701.0px;top:461.5px;font-size:24px;line-height:31px;font-weight:400;color:#fff;transform:scaleX(0.9368);transform-origin:0 0;">res[31:0]</div>
</div>
<div class="t s" style="left:1866.0px;top:461.5px;font-size:24px;line-height:31px;font-weight:400;color:#fff;transform:scaleX(0.8587);transform-origin:0 0;">XXXXXXXX</div>
<svg style="left:1645.0px;top:510.5px" width="23.0" height="23.0" viewBox="0 0 23.0 23.0"><path d="M-4.25,-8.5 L4.25,0 L-4.25,8.5" transform="translate(11.5,11.5)" fill="none" stroke="#a8a8a8" stroke-width="2.6"/></svg>
<svg style="left:1676px;top:512.5px" width="22" height="20" viewBox="0 0 22 20"><path d="M0.5,0.5 H7 L10.5,6.3 L14,0.5 H20.5 V12.5 H0.5 Z" fill="#9bc2d6" stroke="#707070" stroke-width="0.9"/><circle cx="10.5" cy="12.2" r="5.6" fill="#f39522" stroke="#7a7a7a" stroke-width="0.8"/><path d="M8.3,9.8 L10.5,14.4 L12.7,9.8" fill="none" stroke="#fff" stroke-width="1.2"/></svg>
<div style="left:0;top:0;width:1848px;height:1393px;overflow:hidden">
<div class="t s" style="left:1701.0px;top:506.5px;font-size:24px;line-height:31px;font-weight:400;color:#fff;">err_count[31:0]</div>
</div>
<div class="t s" style="left:1866.0px;top:506.5px;font-size:24px;line-height:31px;font-weight:400;color:#fff;transform:scaleX(0.9551);transform-origin:0 0;">00000067</div>
<svg style="left:1645.0px;top:555.5px" width="23.0" height="23.0" viewBox="0 0 23.0 23.0"><path d="M-4.25,-8.5 L4.25,0 L-4.25,8.5" transform="translate(11.5,11.5)" fill="none" stroke="#a8a8a8" stroke-width="2.6"/></svg>
<svg style="left:1676px;top:557.5px" width="22" height="20" viewBox="0 0 22 20"><path d="M0.5,0.5 H7 L10.5,6.3 L14,0.5 H20.5 V12.5 H0.5 Z" fill="#9bc2d6" stroke="#707070" stroke-width="0.9"/><rect x="3.5" y="6.5" width="14" height="11.5" fill="#f39a1e" stroke="#999" stroke-width="0.7"/><path d="M7.5,9 H13.5 M10.5,9 V16 M7.5,16 H13.5" stroke="#555" stroke-width="1.2"/></svg>
<div style="left:0;top:0;width:1848px;height:1393px;overflow:hidden">
<div class="t s" style="left:1701.0px;top:551.5px;font-size:24px;line-height:31px;font-weight:400;color:#fff;transform:scaleX(0.9293);transform-origin:0 0;">x[31:0]</div>
</div>
<svg style="left:1645.0px;top:600.5px" width="23.0" height="23.0" viewBox="0 0 23.0 23.0"><path d="M-4.25,-8.5 L4.25,0 L-4.25,8.5" transform="translate(11.5,11.5)" fill="none" stroke="#a8a8a8" stroke-width="2.6"/></svg>
<svg style="left:1676px;top:602.5px" width="22" height="20" viewBox="0 0 22 20"><path d="M0.5,0.5 H7 L10.5,6.3 L14,0.5 H20.5 V12.5 H0.5 Z" fill="#9bc2d6" stroke="#707070" stroke-width="0.9"/><rect x="3.5" y="6.5" width="14" height="11.5" fill="#f39a1e" stroke="#999" stroke-width="0.7"/><path d="M7.5,9 H13.5 M10.5,9 V16 M7.5,16 H13.5" stroke="#555" stroke-width="1.2"/></svg>
<div style="left:0;top:0;width:1848px;height:1393px;overflow:hidden">
<div class="t s" style="left:1701.0px;top:596.5px;font-size:24px;line-height:31px;font-weight:400;color:#fff;transform:scaleX(0.9431);transform-origin:0 0;">y[31:0]</div>
</div>
<svg style="left:1645.0px;top:645.5px" width="23.0" height="23.0" viewBox="0 0 23.0 23.0"><path d="M-4.25,-8.5 L4.25,0 L-4.25,8.5" transform="translate(11.5,11.5)" fill="none" stroke="#a8a8a8" stroke-width="2.6"/></svg>
<svg style="left:1676px;top:647.5px" width="22" height="20" viewBox="0 0 22 20"><path d="M0.5,0.5 H7 L10.5,6.3 L14,0.5 H20.5 V12.5 H0.5 Z" fill="#9bc2d6" stroke="#707070" stroke-width="0.9"/><rect x="3.5" y="6.5" width="14" height="11.5" fill="#3fa63a" stroke="#999" stroke-width="0.7"/><ellipse cx="10.5" cy="12.2" rx="2.4" ry="3.4" fill="none" stroke="#1d4d1a" stroke-width="1.1"/></svg>
<div style="left:0;top:0;width:1848px;height:1393px;overflow:hidden">
<div class="t s" style="left:1701.0px;top:641.5px;font-size:24px;line-height:31px;font-weight:400;color:#fff;transform:scaleX(0.9271);transform-origin:0 0;">abs[31:0]</div>
</div>
<div class="t s" style="left:1866.0px;top:641.5px;font-size:24px;line-height:31px;font-weight:400;color:#fff;transform:scaleX(0.8587);transform-origin:0 0;">XXXXXXXX</div>
<svg style="left:1645.0px;top:690.5px" width="23.0" height="23.0" viewBox="0 0 23.0 23.0"><path d="M-4.25,-8.5 L4.25,0 L-4.25,8.5" transform="translate(11.5,11.5)" fill="none" stroke="#a8a8a8" stroke-width="2.6"/></svg>
<svg style="left:1676px;top:692.5px" width="22" height="20" viewBox="0 0 22 20"><path d="M0.5,0.5 H7 L10.5,6.3 L14,0.5 H20.5 V12.5 H0.5 Z" fill="#9bc2d6" stroke="#707070" stroke-width="0.9"/><circle cx="10.5" cy="12.2" r="5.6" fill="#f39522" stroke="#7a7a7a" stroke-width="0.8"/><path d="M8.3,9.8 L10.5,14.4 L12.7,9.8" fill="none" stroke="#fff" stroke-width="1.2"/></svg>
<div style="left:0;top:0;width:1848px;height:1393px;overflow:hidden">
<div class="t s" style="left:1701.0px;top:686.5px;font-size:24px;line-height:31px;font-weight:400;color:#fff;transform:scaleX(0.9868);transform-origin:0 0;">min[31:0]</div>
</div>
<div style="left:2071px;top:446px;width:437px;height:2px;background:#fff"></div>
<div style="left:2071px;top:434px;width:2px;height:13px;background:#fff"></div>
<div style="left:2171px;top:430px;width:2px;height:17px;background:#fff"></div>
<div style="left:2371px;top:430px;width:2px;height:17px;background:#fff"></div>
<div style="left:2271px;top:440px;width:2px;height:7px;background:#fff"></div>
<div style="left:2471px;top:440px;width:2px;height:7px;background:#fff"></div>
<div class="t m" style="left:2174.0px;top:424.5px;font-size:20.5px;line-height:27px;font-weight:400;color:#fff;letter-spacing:0.5px">514,996 ps</div>
<div class="t m" style="left:2374.0px;top:424.5px;font-size:20.5px;line-height:27px;font-weight:400;color:#fff;letter-spacing:0.5px">514,998 ps</div>
<div style="left:2499px;top:336px;width:10px;height:15px;background:#f5f500"></div>
<div style="left:2502px;top:341px;width:7px;height:7px;background:#000"></div>
<div style="left:2504px;top:343px;width:5px;height:3px;background:#f5f500"></div>
<div style="left:2071px;top:451px;width:437px;height:2px;background:#00e000"></div>
<div style="left:2071px;top:457px;width:437px;height:2px;background:#f00000"></div>
<div style="left:2071px;top:453px;width:2px;height:4px;background:#c8c8c8"></div>
<div style="left:2171px;top:453px;width:2px;height:4px;background:#c8c8c8"></div>
<div style="left:2271px;top:453px;width:2px;height:4px;background:#c8c8c8"></div>
<div style="left:2371px;top:453px;width:2px;height:4px;background:#c8c8c8"></div>
<div style="left:2471px;top:453px;width:2px;height:4px;background:#c8c8c8"></div>
<div class="t m" style="left:1818px;width:1000px;text-align:center;top:469.5px;font-size:20.5px;line-height:27px;font-weight:400;color:#fff;letter-spacing:0.5px">XXXXXXXX</div>
<div style="left:2071px;top:496px;width:437px;height:2px;background:#f00000"></div>
<div style="left:2071px;top:502px;width:437px;height:2px;background:#00e000"></div>
<div style="left:2071px;top:498px;width:2px;height:4px;background:#c8c8c8"></div>
<div style="left:2171px;top:498px;width:2px;height:4px;background:#c8c8c8"></div>
<div style="left:2271px;top:498px;width:2px;height:4px;background:#c8c8c8"></div>
<div style="left:2371px;top:498px;width:2px;height:4px;background:#c8c8c8"></div>
<div style="left:2471px;top:498px;width:2px;height:4px;background:#c8c8c8"></div>
<div class="t m" style="left:1818px;width:1000px;text-align:center;top:514.5px;font-size:20.5px;line-height:27px;font-weight:400;color:#fff;letter-spacing:0.5px">00000066</div>
<div style="left:2071px;top:541px;width:437px;height:2px;background:#00e000"></div>
<div style="left:2071px;top:543px;width:2px;height:94px;background:#c8c8c8"></div>
<div style="left:2171px;top:543px;width:2px;height:94px;background:#c8c8c8"></div>
<div style="left:2271px;top:543px;width:2px;height:94px;background:#c8c8c8"></div>
<div style="left:2371px;top:543px;width:2px;height:94px;background:#c8c8c8"></div>
<div style="left:2471px;top:543px;width:2px;height:94px;background:#c8c8c8"></div>
<div style="left:2071px;top:637px;width:437px;height:2px;background:#f00000"></div>
<div class="t m" style="left:1818px;width:1000px;text-align:center;top:649.5px;font-size:20.5px;line-height:27px;font-weight:400;color:#fff;letter-spacing:0.5px">XXXXXXXX</div>
<div style="left:2071px;top:676px;width:437px;height:2px;background:#f00000"></div>
<div style="left:2071px;top:678px;width:2px;height:50px;background:#c8c8c8"></div>
<div style="left:2171px;top:678px;width:2px;height:50px;background:#c8c8c8"></div>
<div style="left:2271px;top:678px;width:2px;height:50px;background:#c8c8c8"></div>
<div style="left:2371px;top:678px;width:2px;height:50px;background:#c8c8c8"></div>
<div style="left:2471px;top:678px;width:2px;height:50px;background:#c8c8c8"></div>
<div style="left:2071px;top:728px;width:436px;height:2px;background:#fff"></div>
<div style="left:2509px;top:335px;width:28px;height:474px;background:#f9f9f9;border-left:1px solid #e3e3e3;box-sizing:border-box"></div>
<svg style="left:2511.5px;top:337.5px" width="25.0" height="25.0" viewBox="0 0 25.0 25.0"><path d="M-9.5,4.75 L0,-4.75 L9.5,4.75" transform="translate(12.5,12.5)" fill="none" stroke="#777" stroke-width="3.8"/></svg>
<svg style="left:2511.5px;top:783.5px" width="25.0" height="25.0" viewBox="0 0 25.0 25.0"><path d="M-9.5,-4.75 L0,4.75 L9.5,-4.75" transform="translate(12.5,12.5)" fill="none" stroke="#777" stroke-width="3.8"/></svg>
<div style="left:2515px;top:439px;width:16px;height:222px;background:#c0c0c0;border-radius:8px"></div>
<div style="left:1856px;top:809px;width:205px;height:26px;background:#f9f9f9"></div>
<svg style="left:1858.5px;top:811.5px" width="25.0" height="25.0" viewBox="0 0 25.0 25.0"><path d="M4.75,-9.5 L-4.75,0 L4.75,9.5" transform="translate(12.5,12.5)" fill="none" stroke="#777" stroke-width="3.8"/></svg>
<svg style="left:2034.5px;top:811.5px" width="25.0" height="25.0" viewBox="0 0 25.0 25.0"><path d="M-4.75,-9.5 L4.75,0 L-4.75,9.5" transform="translate(12.5,12.5)" fill="none" stroke="#777" stroke-width="3.8"/></svg>
<div style="left:2069px;top:809px;width:468px;height:26px;background:#f9f9f9;border-top:2px solid #e4e4e4;box-sizing:border-box"></div>
<div style="left:2435px;top:815px;width:68px;height:16px;background:#c0c0c0;border-radius:8px"></div>
<svg style="left:2072.0px;top:811.5px" width="25.0" height="25.0" viewBox="0 0 25.0 25.0"><path d="M4.75,-9.5 L-4.75,0 L4.75,9.5" transform="translate(12.5,12.5)" fill="none" stroke="#777" stroke-width="3.8"/></svg>
<svg style="left:2511.5px;top:811.5px" width="25.0" height="25.0" viewBox="0 0 25.0 25.0"><path d="M-4.75,-9.5 L4.75,0 L-4.75,9.5" transform="translate(12.5,12.5)" fill="none" stroke="#777" stroke-width="3.8"/></svg>
<div style="left:1848px;top:447px;width:8px;height:390px;background:#fff"></div>
<div style="left:2061px;top:809px;width:8px;height:28px;background:#fff"></div>
<div style="left:462px;top:869px;width:2081px;height:484px;background:#e8e8e8;border:1px solid #d2d2d2;box-sizing:border-box"></div>
<div style="left:468px;top:875px;width:2069px;height:54px;background:#ececec"></div>
<div style="left:468px;top:875px;width:208px;height:54px;background:#fff"></div>
<div class="t s" style="left:474.0px;top:887.5px;font-size:24px;line-height:31px;font-weight:700;color:#111;transform:scaleX(0.9747);transform-origin:0 0;">Tcl Console</div>
<svg style="left:648px;top:893px" width="20" height="20" viewBox="0 0 20 20"><path d="M2,2 L18,18 M18,2 L2,18" stroke="#6e6e6e" stroke-width="2.2"/></svg>
<div class="t s" style="left:683.0px;top:887.5px;font-size:24px;line-height:31px;font-weight:700;color:#8e8e8e;transform:scaleX(0.9416);transform-origin:0 0;">Messages</div>
<div style="left:825.5px;top:875px;width:2px;height:46px;background:#c4c4c4"></div>
<div class="t s" style="left:834.0px;top:887.5px;font-size:24px;line-height:31px;font-weight:700;color:#8e8e8e;transform:scaleX(0.9091);transform-origin:0 0;">Log</div>
<div style="left:908.5px;top:875px;width:2px;height:46px;background:#c4c4c4"></div>
<div class="t s" style="left:1907px;width:1000px;text-align:center;top:887.0px;font-size:26px;line-height:34px;font-weight:700;color:#8a8a8a;">?</div>
<div style="left:2434px;top:908px;width:18px;height:3.5px;background:#8a8a8a"></div>
<div style="left:2470px;top:894px;width:18px;height:18px;border:3px solid #8a8a8a;box-sizing:border-box"></div>
<svg style="left:2505px;top:893px" width="20" height="20" viewBox="0 0 20 20"><path d="M10,1.5 H1.5 V18.5 H18.5 V10" fill="none" stroke="#8a8a8a" stroke-width="3"/><path d="M10,10 L18,2 M12,1.5 H18.5 V8" fill="none" stroke="#8a8a8a" stroke-width="2.5"/></svg>
<div style="left:468px;top:929px;width:2069px;height:61px;background:#fff"></div>
<div style="left:534.0px;top:937px;width:1px;height:44px;background:#d8d8d8"></div>
<div style="left:601.0px;top:937px;width:1px;height:44px;background:#d8d8d8"></div>
<div style="left:668.0px;top:937px;width:1px;height:44px;background:#d8d8d8"></div>
<div style="left:735.0px;top:937px;width:1px;height:44px;background:#d8d8d8"></div>
<div style="left:802.0px;top:937px;width:1px;height:44px;background:#d8d8d8"></div>
<div style="left:869.0px;top:937px;width:1px;height:44px;background:#d8d8d8"></div>
<div style="left:936.0px;top:937px;width:1px;height:44px;background:#d8d8d8"></div>
<svg style="left:488px;top:947px" width="27" height="27" viewBox="0 0 27 27"><circle cx="10.7" cy="10.7" r="9.3" fill="none" stroke="#33508a" stroke-width="2.8"/><line x1="18.6" y1="18.6" x2="22.6" y2="22.6" stroke="#33508a" stroke-width="5" stroke-linecap="round"/></svg>
<svg style="left:556.5px;top:946.5px" width="21" height="25" viewBox="0 0 21 25"><polygon points="0,0 21,0 10.5,9.0" fill="#33508a"/><rect x="0" y="11.0" width="21" height="3.0" fill="#33508a"/><polygon points="10.5,16.0 21,25 0,25" fill="#33508a"/></svg>
<svg style="left:624.0px;top:946.5px" width="20" height="25" viewBox="0 0 20 25"><polygon points="10.0,0 20,7.5 0,7.5" fill="#33508a"/><rect x="0" y="11.0" width="20" height="3.0" fill="#33508a"/><polygon points="0,17.5 20,17.5 10.0,25" fill="#33508a"/></svg>
<div style="left:693px;top:947px;width:6px;height:25px;background:#2f4f8a"></div>
<div style="left:704px;top:947px;width:6px;height:25px;background:#2f4f8a"></div>
<svg style="left:754px;top:945px" width="28" height="28" viewBox="0 0 28 28"><rect x="2" y="2" width="18" height="20" fill="#fff" stroke="#2f4f8a" stroke-width="2.5"/><rect x="7" y="7" width="19" height="20" fill="#fff" stroke="#2f4f8a" stroke-width="2.5"/><path d="M11,13 H22 M11,17 H22 M11,21 H22" stroke="#2f4f8a" stroke-width="2"/></svg>
<svg style="left:821px;top:945px" width="28" height="28" viewBox="0 0 28 28"><rect x="2" y="2" width="24" height="24" fill="#fff" stroke="#2f4f8a" stroke-width="2.5"/><rect x="9" y="3" width="10" height="22" fill="#2f4f8a"/><path d="M2,8 H9 M2,14 H9 M2,20 H9 M19,8 H26 M19,14 H26 M19,20 H26" stroke="#2f4f8a" stroke-width="2"/><path d="M14,4 V24" stroke="#fff" stroke-width="1.5"/></svg>
<svg style="left:889px;top:945px" width="26" height="28" viewBox="0 0 26 28"><rect x="2" y="4" width="22" height="3" fill="#2f4f8a"/><rect x="9" y="1" width="8" height="3" fill="#2f4f8a"/><path d="M4,9 H22 L21,27 H5 Z" fill="#2f4f8a"/><path d="M10,12 V23 M16,12 V23" stroke="#fff" stroke-width="2"/></svg>
<div style="left:468px;top:994px;width:2022px;height:264px;background:#fff"></div>
<div style="left:492px;top:993px;width:2px;height:258px;background:repeating-linear-gradient(180deg,#8a8a8a 0 5.5px,transparent 5.5px 14.2px)"></div>
<svg style="left:483px;top:1199px" width="21" height="22" viewBox="0 0 21 22"><path d="M10,1 L19.5,7 V18 Q19.5,20.5 17,20.5 H3 Q0.8,20.5 0.8,18 V7 Z" fill="#fff" stroke="#9a9a9a" stroke-width="1.5"/><path d="M5,11.5 H15" stroke="#9a9a9a" stroke-width="1.5"/></svg>
<div class="t m" style="left:518.0px;top:999.0px;font-size:23.3px;line-height:30px;font-weight:400;color:#222;">Incorrect res at time 515ns:</div>
<div class="t m" style="left:518.0px;top:1032.0px;font-size:23.3px;line-height:30px;font-weight:400;color:#222;">a = 23, b = 161</div>
<div class="t m" style="left:518.0px;top:1065.0px;font-size:23.3px;line-height:30px;font-weight:400;color:#222;">design    res = x</div>
<div class="t m" style="left:518.0px;top:1098.0px;font-size:23.3px;line-height:30px;font-weight:400;color:#222;">reference res = 172</div>
<div class="t m" style="left:518.0px;top:1131.0px;font-size:23.3px;line-height:30px;font-weight:400;color:#222;">------------------</div>
<div class="t m" style="left:518.0px;top:1164.0px;font-size:23.3px;line-height:30px;font-weight:400;color:#222;">Test has been finished with         103 errors</div>
<div class="t m" style="left:518.0px;top:1197.0px;font-size:23.3px;line-height:30px;font-weight:400;color:#222;">relaunch_sim: Time (s): cpu = 00:00:00 ; elapsed = 00:00:06 . Memory (MB): peak = 1849.301 ; gain = 0.000</div>
<div style="left:2490px;top:994px;width:27px;height:264px;background:#f9f9f9;border-left:1px solid #e3e3e3;box-sizing:border-box"></div>
<svg style="left:2490.5px;top:996.5px" width="25.0" height="25.0" viewBox="0 0 25.0 25.0"><path d="M-9.5,4.75 L0,-4.75 L9.5,4.75" transform="translate(12.5,12.5)" fill="none" stroke="#777" stroke-width="3.8"/></svg>
<svg style="left:2490.5px;top:1232.5px" width="25.0" height="25.0" viewBox="0 0 25.0 25.0"><path d="M-9.5,-4.75 L0,4.75 L9.5,-4.75" transform="translate(12.5,12.5)" fill="none" stroke="#777" stroke-width="3.8"/></svg>
<div style="left:2495px;top:1156px;width:16px;height:67px;background:#c0c0c0;border-radius:8px"></div>
<div style="left:2517px;top:994px;width:20px;height:264px;background:#fff"></div>
<div style="left:2517px;top:1004px;width:19px;height:10px;background:#e8d02c"></div>
<div style="left:2517px;top:1037px;width:19px;height:3px;background:#e8d02c"></div>
<div style="left:2517px;top:1060px;width:19px;height:3px;background:#e8d02c"></div>
<div style="left:2517px;top:1085px;width:19px;height:3px;background:#e8d02c"></div>
<div style="left:2517px;top:1109px;width:19px;height:5px;background:#e8d02c"></div>
<div style="left:2517px;top:1136px;width:19px;height:3px;background:#e01010"></div>
<div style="left:2517px;top:1161px;width:19px;height:3px;background:#e8d02c"></div>
<div style="left:2517px;top:1185px;width:19px;height:3px;background:#e8d02c"></div>
<div style="left:2517px;top:1209px;width:19px;height:3px;background:#e8d02c"></div>
<div style="left:468px;top:1258px;width:50px;height:26px;background:#fff"></div>
<div style="left:518px;top:1258px;width:1972px;height:26px;background:#f9f9f9;border-top:2px solid #e4e4e4;box-sizing:border-box"></div>
<div style="left:551px;top:1264px;width:892px;height:16px;background:#c0c0c0;border-radius:8px"></div>
<svg style="left:519.0px;top:1260.5px" width="25.0" height="25.0" viewBox="0 0 25.0 25.0"><path d="M4.75,-9.5 L-4.75,0 L4.75,9.5" transform="translate(12.5,12.5)" fill="none" stroke="#777" stroke-width="3.8"/></svg>
<svg style="left:2463.5px;top:1260.5px" width="25.0" height="25.0" viewBox="0 0 25.0 25.0"><path d="M-4.75,-9.5 L4.75,0 L-4.75,9.5" transform="translate(12.5,12.5)" fill="none" stroke="#777" stroke-width="3.8"/></svg>
<div style="left:2490px;top:1258px;width:47px;height:26px;background:#fff"></div>
<div style="left:468px;top:1284px;width:2069px;height:62px;background:#fff"></div>
<div style="left:474px;top:1294px;width:2057px;height:47px;background:#fff;border:2px solid #b6b6b6;box-sizing:border-box"></div>
<div class="t m" style="left:488.0px;top:1305.0px;font-size:23.3px;line-height:30px;font-weight:400;color:#9a9a9a;">Type a Tcl command here</div>
<svg style="left:876px;top:121px" width="42" height="43" viewBox="0 0 42 43"><circle cx="21" cy="20.2" r="18.3" fill="#000" opacity="0.2"/><circle cx="21" cy="19" r="18" fill="#ee3b3d"/></svg>
<div class="t s" style="left:397px;width:1000px;text-align:center;top:125.0px;font-size:25px;line-height:32px;font-weight:700;color:#fff;">1</div>
<svg style="left:942px;top:121px" width="42" height="43" viewBox="0 0 42 43"><circle cx="21" cy="20.2" r="18.3" fill="#000" opacity="0.2"/><circle cx="21" cy="19" r="18" fill="#ee3b3d"/></svg>
<div class="t s" style="left:463px;width:1000px;text-align:center;top:125.0px;font-size:25px;line-height:32px;font-weight:700;color:#fff;">2</div>
<svg style="left:1001px;top:120px" width="42" height="43" viewBox="0 0 42 43"><circle cx="21" cy="20.2" r="18.3" fill="#000" opacity="0.2"/><circle cx="21" cy="19" r="18" fill="#ee3b3d"/></svg>
<div class="t s" style="left:522px;width:1000px;text-align:center;top:124.0px;font-size:25px;line-height:32px;font-weight:700;color:#fff;">3</div>
<svg style="left:1493px;top:123px" width="42" height="43" viewBox="0 0 42 43"><circle cx="21" cy="20.2" r="18.3" fill="#000" opacity="0.2"/><circle cx="21" cy="19" r="18" fill="#ee3b3d"/></svg>
<div class="t s" style="left:1014px;width:1000px;text-align:center;top:127.0px;font-size:25px;line-height:32px;font-weight:700;color:#fff;">4</div>
<svg style="left:2515px;top:181px" width="42" height="43" viewBox="0 0 42 43"><circle cx="21" cy="20.2" r="18.3" fill="#000" opacity="0.2"/><circle cx="21" cy="19" r="18" fill="#ee3b3d"/></svg>
<div class="t s" style="left:2036px;width:1000px;text-align:center;top:185.0px;font-size:25px;line-height:32px;font-weight:700;color:#fff;">5</div>
</body></html>
